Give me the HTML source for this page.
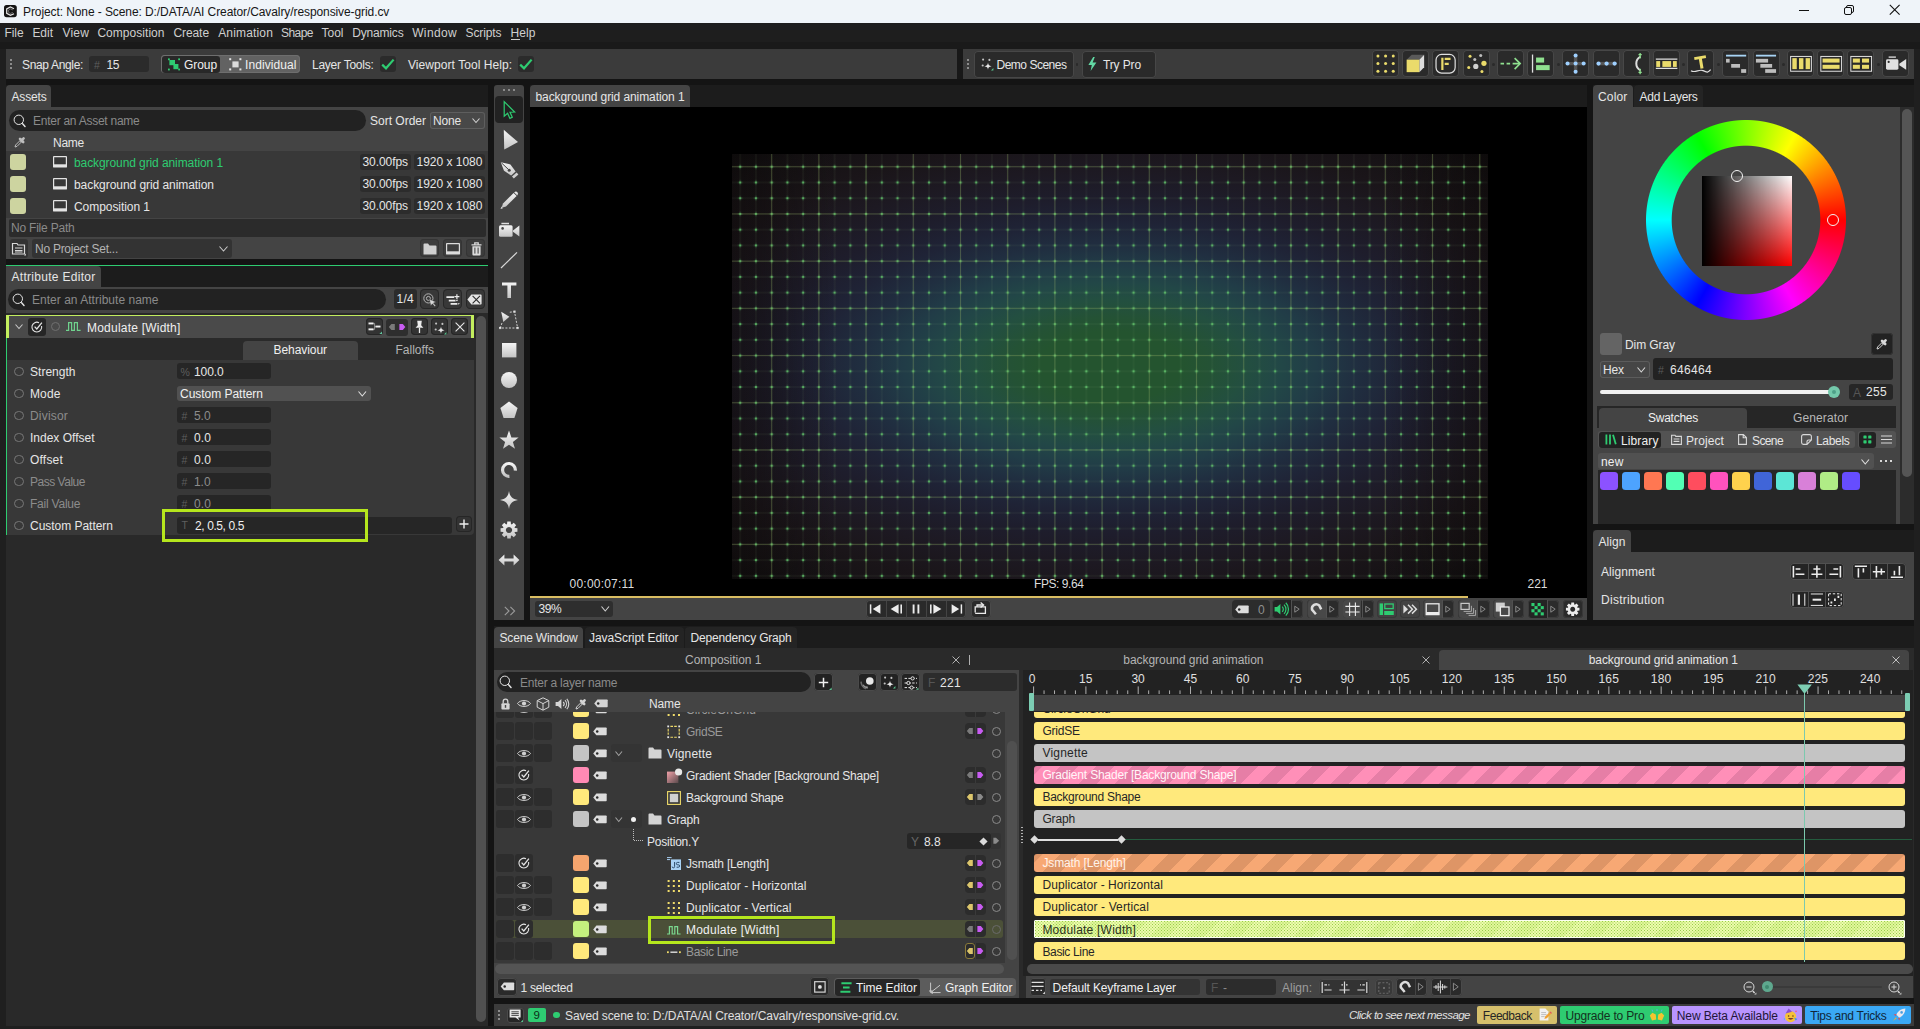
<!DOCTYPE html>
<html><head><meta charset="utf-8"><title>Cavalry</title>
<style>
html,body{margin:0;padding:0;background:#1f1f1f;}
body{width:1920px;height:1029px;position:relative;overflow:hidden;font-family:"Liberation Sans",sans-serif;}
.a{position:absolute;box-sizing:border-box;}
.t{position:absolute;white-space:pre;}
svg{overflow:visible}
</style></head><body>
<div class="a" style="left:0px;top:0px;width:1920px;height:23px;background:#eff4f9;"></div>
<svg class="a" style="left:3.5px;top:4.6px;" width="13" height="12.4" viewBox="0 0 13 12.4"><rect x="0" y="0" width="12.8" height="12.2" rx="2.6" fill="#141414"/><path d="M10 3.7 L6.4 1.9 L2.7 3.9 V8.4 L6.4 10.4 L10 8.7" fill="none" stroke="#e4e4e4" stroke-width="1.25"/><path d="M8.9 5 L6.4 3.9 L4.6 4.9 V7.4 L6.4 8.4 L8.9 7.4" fill="none" stroke="#8a8a8a" stroke-width="0.7"/></svg>
<span class="t" style="top:3.65px;line-height:16px;font-size:12px;color:#161616;left:23px;letter-spacing:-0.09px;">Project: None - Scene: D:/DATA/AI Creator/Cavalry/responsive-grid.cv</span>
<svg class="a" style="left:1798px;top:4.1px;" width="12" height="12" viewBox="0 0 12 12"><path d="M1 6.5 H11" stroke="#111" stroke-width="1"/></svg>
<svg class="a" style="left:1843px;top:4.1px;" width="12" height="12" viewBox="0 0 12 12"><rect x="1.5" y="3.5" width="7" height="7" rx="1.5" fill="none" stroke="#111" stroke-width="1"/><path d="M3.5 3.5 V3 a1.5 1.5 0 0 1 1.5 -1.5 H9 a1.5 1.5 0 0 1 1.5 1.5 V7 a1.5 1.5 0 0 1 -1.5 1.5 H8.5" fill="none" stroke="#111" stroke-width="1"/></svg>
<svg class="a" style="left:1889.4px;top:4.3px;" width="12" height="12" viewBox="0 0 12 12"><path d="M0.8 0.8 L10.6 10.6 M10.6 0.8 L0.8 10.6" stroke="#111" stroke-width="1.1"/></svg>
<div class="a" style="left:0px;top:23px;width:1920px;height:19.4px;background:#1e1e1e;"></div>
<div class="a" style="left:0px;top:42.4px;width:1920px;height:6.6px;background:#1a1a1a;"></div>
<div class="a" style="left:6px;top:79px;width:1908px;height:947.2px;background:#141414;"></div>
<div class="a" style="left:957px;top:49px;width:6px;height:30px;background:#181818;"></div>
<div class="a" style="left:6px;top:85px;width:481.5px;height:22.2px;background:#1c1c1c;"></div>
<div class="a" style="left:6px;top:266px;width:481.5px;height:22.2px;background:#1c1c1c;"></div>
<div class="a" style="left:530px;top:85px;width:1057px;height:22.2px;background:#1c1c1c;"></div>
<div class="a" style="left:1593px;top:85px;width:321px;height:22.2px;background:#1c1c1c;"></div>
<div class="a" style="left:1593px;top:530px;width:321px;height:22.2px;background:#1c1c1c;"></div>
<div class="a" style="left:494px;top:625.8px;width:1420px;height:22.2px;background:#1c1c1c;"></div>
<span class="t" style="top:25.15px;line-height:16px;font-size:12px;color:#cfcfcf;left:4.6px;letter-spacing:-0.11px;">File</span>
<span class="t" style="top:25.15px;line-height:16px;font-size:12px;color:#cfcfcf;left:32.4px;letter-spacing:-0.02px;">Edit</span>
<span class="t" style="top:25.15px;line-height:16px;font-size:12px;color:#cfcfcf;left:62.5px;letter-spacing:0.18px;">View</span>
<span class="t" style="top:25.15px;line-height:16px;font-size:12px;color:#cfcfcf;left:97.4px;letter-spacing:0.04px;">Composition</span>
<span class="t" style="top:25.15px;line-height:16px;font-size:12px;color:#cfcfcf;left:173.4px;letter-spacing:-0.07px;">Create</span>
<span class="t" style="top:25.15px;line-height:16px;font-size:12px;color:#cfcfcf;left:218.2px;letter-spacing:0.16px;">Animation</span>
<span class="t" style="top:25.15px;line-height:16px;font-size:12px;color:#cfcfcf;left:281px;letter-spacing:-0.54px;">Shape</span>
<span class="t" style="top:25.15px;line-height:16px;font-size:12px;color:#cfcfcf;left:321.6px;letter-spacing:-0.03px;">Tool</span>
<span class="t" style="top:25.15px;line-height:16px;font-size:12px;color:#cfcfcf;left:352.2px;letter-spacing:-0.17px;">Dynamics</span>
<span class="t" style="top:25.15px;line-height:16px;font-size:12px;color:#cfcfcf;left:412.2px;letter-spacing:0.35px;">Window</span>
<span class="t" style="top:25.15px;line-height:16px;font-size:12px;color:#cfcfcf;left:465.5px;letter-spacing:-0.1px;">Scripts</span>
<span class="t" style="top:25.15px;line-height:16px;font-size:12px;color:#cfcfcf;left:510.4px;letter-spacing:0.13px;">Help</span>
<div class="a" style="left:510.6px;top:39.3px;width:9.2px;height:1px;background:#cfcfcf;"></div>
<div class="a" style="left:6px;top:49px;width:951px;height:30px;background:#3b3b3b;"></div>
<div class="a" style="left:10.1px;top:59.2px;width:2px;height:2px;background:#8c8c8c;"></div>
<div class="a" style="left:10.1px;top:63.2px;width:2px;height:2px;background:#8c8c8c;"></div>
<div class="a" style="left:10.1px;top:67.2px;width:2px;height:2px;background:#8c8c8c;"></div>
<span class="t" style="top:56.65px;line-height:16px;font-size:12px;color:#e6e6e6;left:22px;letter-spacing:-0.34px;">Snap Angle:</span>
<div class="a" style="left:89px;top:56px;width:60px;height:16px;background:#2b2b2b;border-radius:3px;"></div>
<span class="t" style="top:57.65px;line-height:14px;font-size:10.5px;color:#5e5e5e;left:94px;">#</span>
<span class="t" style="top:56.65px;line-height:16px;font-size:12px;color:#e6e6e6;left:106.5px;letter-spacing:-0.43px;">15</span>
<div class="a" style="left:161px;top:55px;width:139.2px;height:18px;background:#626262;border-radius:4px;box-shadow:inset 0 0 0 1px #6e6e6e;"></div>
<div class="a" style="left:162px;top:56px;width:58px;height:16.5px;background:#282828;border-radius:3px;"></div>
<svg class="a" style="left:167px;top:57.5px;" width="14" height="13" viewBox="0 0 14 13"><rect x="2.4" y="2" width="5.6" height="5.2" fill="#2ecc71"/><rect x="6.4" y="6" width="5" height="5.2" fill="#2ecc71"/><rect x="1" y="0.4" width="1.8" height="1.8" fill="#2ecc71"/><rect x="1" y="10.6" width="1.8" height="1.8" fill="#2ecc71"/><rect x="11.2" y="0.4" width="1.8" height="1.8" fill="#2ecc71"/><rect x="11.2" y="10.6" width="1.8" height="1.8" fill="#2ecc71"/></svg>
<span class="t" style="top:56.65px;line-height:16px;font-size:12px;color:#f0f0f0;left:184px;letter-spacing:-0.07px;">Group</span>
<svg class="a" style="left:228.6px;top:57.6px;" width="13" height="13" viewBox="0 0 13 13"><rect x="3.4" y="3.4" width="6.2" height="6" fill="#dcdcdc"/><rect x="0.2" y="0.2" width="2" height="2" fill="#e4e4e4"/><rect x="0.2" y="10.4" width="2" height="2" fill="#e4e4e4"/><rect x="10.4" y="0.2" width="2" height="2" fill="#e4e4e4"/><rect x="10.4" y="10.4" width="2" height="2" fill="#e4e4e4"/></svg>
<span class="t" style="top:56.65px;line-height:16px;font-size:12px;color:#f0f0f0;left:245px;letter-spacing:0.08px;">Individual</span>
<span class="t" style="top:56.65px;line-height:16px;font-size:12px;color:#e6e6e6;left:312px;letter-spacing:-0.25px;">Layer Tools:</span>
<div class="a" style="left:380px;top:56px;width:16px;height:16px;background:#2b2b2b;border-radius:3px;"></div>
<svg class="a" style="left:380px;top:56px;" width="16" height="16" viewBox="0 0 16 16"><path d="M2.2 8.6 L6 12.3 L13.6 3.6" fill="none" stroke="#2ecc71" stroke-width="2.2" stroke-linejoin="miter"/></svg>
<span class="t" style="top:56.65px;line-height:16px;font-size:12px;color:#e6e6e6;left:408px;letter-spacing:0.06px;">Viewport Tool Help:</span>
<div class="a" style="left:518px;top:56px;width:16px;height:16px;background:#2b2b2b;border-radius:3px;"></div>
<svg class="a" style="left:518px;top:56px;" width="16" height="16" viewBox="0 0 16 16"><path d="M2.2 8.6 L6 12.3 L13.6 3.6" fill="none" stroke="#2ecc71" stroke-width="2.2" stroke-linejoin="miter"/></svg>
<div class="a" style="left:963px;top:49px;width:951px;height:30px;background:#3b3b3b;"></div>
<div class="a" style="left:967.1px;top:59.2px;width:2px;height:2px;background:#8c8c8c;"></div>
<div class="a" style="left:967.1px;top:63.2px;width:2px;height:2px;background:#8c8c8c;"></div>
<div class="a" style="left:967.1px;top:67.2px;width:2px;height:2px;background:#8c8c8c;"></div>
<div class="a" style="left:974px;top:51px;width:99.5px;height:26.5px;background:#2a2a2a;border-radius:4px;box-shadow:inset 0 0 0 1px #474747;"></div>
<svg class="a" style="left:980px;top:57.4px;" width="14" height="14" viewBox="0 0 14 14"><circle cx="3.1" cy="2.6" r="1.05" fill="#c4c4c4"/><circle cx="9.4" cy="2.9" r="1.05" fill="#c4c4c4"/><circle cx="2.7" cy="8.5" r="1.05" fill="#c4c4c4"/><path d="M8 5.6 C8.3 8 8.9 8.8 11.6 9.2 C8.9 9.6 8.3 10.4 8 12.8 C7.7 10.4 7.1 9.6 4.4 9.2 C7.1 8.8 7.7 8 8 5.6 Z" fill="#e8e8e8"/><path d="M13.4 11 V13.4 H11 Z" fill="#59c58f"/></svg>
<span class="t" style="top:56.65px;line-height:16px;font-size:12px;color:#e6e6e6;left:996.5px;letter-spacing:-0.49px;">Demo Scenes</span>
<div class="a" style="left:1075.9px;top:63.1px;width:2.6px;height:2.6px;background:#2a2a2a;border-radius:2px;"></div>
<div class="a" style="left:1081.5px;top:51px;width:74px;height:26.5px;background:#2a2a2a;border-radius:4px;box-shadow:inset 0 0 0 1px #474747;"></div>
<svg class="a" style="left:1088px;top:57px;" width="9" height="14" viewBox="0 0 9 14"><path d="M5.2 0 L0.4 8 H3.8 L2.6 14 L8.4 5.4 H4.6 L6.8 0 Z" fill="#62d9a4"/></svg>
<span class="t" style="top:56.65px;line-height:16px;font-size:12px;color:#e6e6e6;left:1103px;letter-spacing:-0.13px;">Try Pro</span>
<div class="a" style="left:1372.3px;top:50.3px;width:27.2px;height:27.2px;background:#2a2a2a;border-radius:4px;box-shadow:inset 0 0 0 1px #474747;"></div>
<svg class="a" style="left:1372.3px;top:50.3px;" width="27.2" height="27.2" viewBox="0 0 27 27"><circle cx="5.9" cy="5.9" r="1.5" fill="#eadb6b"/><circle cx="5.9" cy="13.5" r="1.5" fill="#eadb6b"/><circle cx="5.9" cy="21.1" r="1.5" fill="#eadb6b"/><circle cx="13.5" cy="5.9" r="1.5" fill="#eadb6b"/><circle cx="13.5" cy="13.5" r="1.5" fill="#eadb6b"/><circle cx="13.5" cy="21.1" r="1.5" fill="#eadb6b"/><circle cx="21.1" cy="5.9" r="1.5" fill="#eadb6b"/><circle cx="21.1" cy="13.5" r="1.5" fill="#eadb6b"/><circle cx="21.1" cy="21.1" r="1.5" fill="#eadb6b"/></svg>
<div class="a" style="left:1402.3px;top:50.3px;width:27.2px;height:27.2px;background:#2a2a2a;border-radius:4px;box-shadow:inset 0 0 0 1px #474747;"></div>
<svg class="a" style="left:1402.3px;top:50.3px;" width="27.2" height="27.2" viewBox="0 0 27 27"><path d="M4.6 9.6 L9.6 4.8 H22 L17.2 9.6 Z" fill="#5a5a5a"/><path d="M17.2 9.6 L22 4.8 V17.2 L17.2 22 Z" fill="#dcdcdc"/><rect x="4.6" y="9.6" width="12.6" height="12.4" fill="#eadb6b"/></svg>
<div class="a" style="left:1432.3px;top:50.3px;width:27.2px;height:27.2px;background:#2a2a2a;border-radius:4px;box-shadow:inset 0 0 0 1px #474747;"></div>
<svg class="a" style="left:1432.3px;top:50.3px;" width="27.2" height="27.2" viewBox="0 0 27 27"><rect x="4" y="4.4" width="19" height="18.6" rx="5.5" fill="none" stroke="#e0e0e0" stroke-width="1.2"/><path d="M9.2 7.6 H11.4 V19.8 H9.2 Z M12.6 7.6 H18.4 V10 H12.6 Z M12.6 12.6 H16.6 V14.8 H12.6 Z" fill="#eadb6b"/></svg>
<div class="a" style="left:1462.5px;top:50.3px;width:27.2px;height:27.2px;background:#2a2a2a;border-radius:4px;box-shadow:inset 0 0 0 1px #474747;"></div>
<svg class="a" style="left:1462.5px;top:50.3px;" width="27.2" height="27.2" viewBox="0 0 27 27"><circle cx="7" cy="6.3" r="1.5" fill="#eadb6b"/><circle cx="5.7" cy="17.4" r="1.5" fill="#eadb6b"/><circle cx="18.8" cy="21.3" r="1.5" fill="#eadb6b"/><circle cx="20.8" cy="13.2" r="2.6" fill="#eadb6b"/><circle cx="17.6" cy="5.4" r="1.5" fill="#bdbdbd"/><circle cx="11.7" cy="9.5" r="1.5" fill="#bdbdbd"/><circle cx="12.7" cy="16.3" r="2.6" fill="#d0d0d0"/></svg>
<div class="a" style="left:1497px;top:50.3px;width:27.2px;height:27.2px;background:#2a2a2a;border-radius:4px;box-shadow:inset 0 0 0 1px #474747;"></div>
<svg class="a" style="left:1497px;top:50.3px;" width="27.2" height="27.2" viewBox="0 0 27 27"><path d="M3.5 13.5 H7 M9.5 13.5 H13 M15.5 13.5 H22" stroke="#8fe08f" stroke-width="1.6" fill="none"/><path d="M17.5 8 L23 13.5 L17.5 19" stroke="#8fe08f" stroke-width="1.6" fill="none"/></svg>
<div class="a" style="left:1527px;top:50.3px;width:27.2px;height:27.2px;background:#2a2a2a;border-radius:4px;box-shadow:inset 0 0 0 1px #474747;"></div>
<svg class="a" style="left:1527px;top:50.3px;" width="27.2" height="27.2" viewBox="0 0 27 27"><path d="M5.5 4.5 V22.5" stroke="#e0e0e0" stroke-width="1.3"/><rect x="9" y="7.5" width="8" height="5" fill="#8fe08f"/><rect x="9" y="15" width="13.5" height="5" fill="#8fe08f"/></svg>
<div class="a" style="left:1562px;top:50.3px;width:27.2px;height:27.2px;background:#2a2a2a;border-radius:4px;box-shadow:inset 0 0 0 1px #474747;"></div>
<svg class="a" style="left:1562px;top:50.3px;" width="27.2" height="27.2" viewBox="0 0 27 27"><path d="M13.5 6 V21 M6 13.5 H21" stroke="#555" stroke-width="3.4"/><circle cx="13.5" cy="5.5" r="2" fill="#9fd0ff"/><circle cx="13.5" cy="21.5" r="2" fill="#9fd0ff"/><circle cx="5.5" cy="13.5" r="2" fill="#9fd0ff"/><circle cx="21.5" cy="13.5" r="2" fill="#9fd0ff"/><circle cx="13.5" cy="13.5" r="2" fill="#9fd0ff"/></svg>
<div class="a" style="left:1592.5px;top:50.3px;width:27.2px;height:27.2px;background:#2a2a2a;border-radius:4px;box-shadow:inset 0 0 0 1px #474747;"></div>
<svg class="a" style="left:1592.5px;top:50.3px;" width="27.2" height="27.2" viewBox="0 0 27 27"><path d="M5.5 13.5 H21.5" stroke="#555" stroke-width="3.4"/><circle cx="5.5" cy="13.5" r="2.1" fill="#9fd0ff"/><circle cx="13.5" cy="13.5" r="2.1" fill="#9fd0ff"/><circle cx="21.5" cy="13.5" r="2.1" fill="#9fd0ff"/></svg>
<div class="a" style="left:1622.5px;top:50.3px;width:27.2px;height:27.2px;background:#2a2a2a;border-radius:4px;box-shadow:inset 0 0 0 1px #474747;"></div>
<svg class="a" style="left:1622.5px;top:50.3px;" width="27.2" height="27.2" viewBox="0 0 27 27"><path d="M17.4 6.6 A7.6 7.6 0 0 0 17.4 20.2" fill="none" stroke="#dcdcdc" stroke-width="2"/><path d="M17 3 V8.4 M17 18.6 V24 M15.4 4.6 H18.6 M15.4 22.2 H18.6" stroke="#8fe08f" stroke-width="1.3"/></svg>
<div class="a" style="left:1652.5px;top:50.3px;width:27.2px;height:27.2px;background:#2a2a2a;border-radius:4px;box-shadow:inset 0 0 0 1px #474747;"></div>
<svg class="a" style="left:1652.5px;top:50.3px;" width="27.2" height="27.2" viewBox="0 0 27 27"><path d="M2.8 9.1 H24.2 M2.8 18.3 H24.2" stroke="#e0e0e0" stroke-width="1.1"/><rect x="3.2" y="11" width="3.9" height="5.8" fill="#eadb6b"/><rect x="9.3" y="11" width="8.7" height="5.8" fill="#eadb6b"/><rect x="19.8" y="11" width="3.8" height="5.8" fill="#eadb6b"/></svg>
<div class="a" style="left:1687px;top:50.3px;width:27.2px;height:27.2px;background:#2a2a2a;border-radius:4px;box-shadow:inset 0 0 0 1px #474747;"></div>
<svg class="a" style="left:1687px;top:50.3px;" width="27.2" height="27.2" viewBox="0 0 27 27"><path d="M7 7.2 L18.5 5.2 L19 8 L14.8 8.8 L16.4 18 L13.4 18.5 L11.8 9.3 L7.5 10 Z" fill="#eadb6b"/><path d="M4 20.5 C8 23.5 12 18.5 16 20.5 S21 22.5 23.5 19.5" fill="none" stroke="#e0e0e0" stroke-width="1.2"/></svg>
<div class="a" style="left:1722px;top:50.3px;width:27.2px;height:27.2px;background:#2a2a2a;border-radius:4px;box-shadow:inset 0 0 0 1px #474747;"></div>
<svg class="a" style="left:1722px;top:50.3px;" width="27.2" height="27.2" viewBox="0 0 27 27"><path d="M4 5.6 H24" stroke="#a8d4f5" stroke-width="1.8"/><rect x="4" y="8.8" width="3.6" height="3.7" fill="#bdbdbd"/><rect x="9.1" y="13.9" width="8.8" height="3.7" fill="#bdbdbd"/><rect x="19" y="19" width="5" height="3.7" fill="#bdbdbd"/></svg>
<div class="a" style="left:1753px;top:50.3px;width:27.2px;height:27.2px;background:#2a2a2a;border-radius:4px;box-shadow:inset 0 0 0 1px #474747;"></div>
<svg class="a" style="left:1753px;top:50.3px;" width="27.2" height="27.2" viewBox="0 0 27 27"><path d="M2.9 5.6 H22.9" stroke="#a8d4f5" stroke-width="1.8"/><rect x="2.9" y="8.8" width="12.1" height="3.7" fill="#bdbdbd"/><rect x="7.3" y="13.9" width="11.7" height="3.7" fill="#bdbdbd"/><rect x="12.1" y="19" width="10.8" height="3.7" fill="#bdbdbd"/></svg>
<div class="a" style="left:1787px;top:50.3px;width:27.2px;height:27.2px;background:#2a2a2a;border-radius:4px;box-shadow:inset 0 0 0 1px #474747;"></div>
<svg class="a" style="left:1787px;top:50.3px;" width="27.2" height="27.2" viewBox="0 0 27 27"><rect x="3.6" y="6.4" width="20.6" height="14.7" fill="none" stroke="#e0e0e0" stroke-width="1"/><rect x="5.3" y="8.1" width="4.4" height="10.9" fill="#eadb6b"/><rect x="11.9" y="8.1" width="4.4" height="10.9" fill="#eadb6b"/><rect x="18.5" y="8.1" width="4.3" height="10.9" fill="#eadb6b"/></svg>
<div class="a" style="left:1817px;top:50.3px;width:27.2px;height:27.2px;background:#2a2a2a;border-radius:4px;box-shadow:inset 0 0 0 1px #474747;"></div>
<svg class="a" style="left:1817px;top:50.3px;" width="27.2" height="27.2" viewBox="0 0 27 27"><rect x="3.8" y="6.4" width="20.6" height="14.7" fill="none" stroke="#e0e0e0" stroke-width="1"/><rect x="5.5" y="8.5" width="16.9" height="4" fill="#eadb6b"/><rect x="5.5" y="14.7" width="16.9" height="4" fill="#eadb6b"/></svg>
<div class="a" style="left:1847px;top:50.3px;width:27.2px;height:27.2px;background:#2a2a2a;border-radius:4px;box-shadow:inset 0 0 0 1px #474747;"></div>
<svg class="a" style="left:1847px;top:50.3px;" width="27.2" height="27.2" viewBox="0 0 27 27"><rect x="3.8" y="6.4" width="20.6" height="14.7" fill="none" stroke="#e0e0e0" stroke-width="1"/><rect x="5.8" y="8.5" width="7" height="4" fill="#eadb6b"/><rect x="14.9" y="8.5" width="7" height="4" fill="#eadb6b"/><rect x="5.8" y="14.7" width="7" height="4" fill="#eadb6b"/><rect x="14.9" y="14.7" width="7" height="4" fill="#eadb6b"/></svg>
<div class="a" style="left:1882px;top:50.3px;width:27.2px;height:27.2px;background:#2a2a2a;border-radius:4px;box-shadow:inset 0 0 0 1px #474747;"></div>
<svg class="a" style="left:1882px;top:50.3px;" width="27.2" height="27.2" viewBox="0 0 27 27"><rect x="4" y="9.3" width="12.3" height="10.2" rx="1.4" fill="#e0e0e0"/><path d="M17.2 13.6 L24 9 V19.6 L17.2 15.2 Z" fill="#e0e0e0"/><rect x="6.6" y="6.4" width="7.2" height="1.3" fill="#e0e0e0"/><circle cx="6.6" cy="11.8" r="1.1" fill="#2a2a2a"/></svg>
<div class="a" style="left:1492px;top:63.1px;width:2.6px;height:2.6px;background:#2a2a2a;border-radius:2px;"></div>
<div class="a" style="left:1557px;top:63.1px;width:2.6px;height:2.6px;background:#2a2a2a;border-radius:2px;"></div>
<div class="a" style="left:1682.4px;top:63.1px;width:2.6px;height:2.6px;background:#2a2a2a;border-radius:2px;"></div>
<div class="a" style="left:1717.4px;top:63.1px;width:2.6px;height:2.6px;background:#2a2a2a;border-radius:2px;"></div>
<div class="a" style="left:1782.3px;top:63.1px;width:2.6px;height:2.6px;background:#2a2a2a;border-radius:2px;"></div>
<div class="a" style="left:1877.3px;top:63.1px;width:2.6px;height:2.6px;background:#2a2a2a;border-radius:2px;"></div>
<div class="a" style="left:6px;top:85px;width:45px;height:23px;background:#444444;border-radius:4px 4px 0 0;"></div>
<span class="t" style="top:88.65px;line-height:16px;font-size:12px;color:#e6e6e6;left:11.5px;letter-spacing:-0.17px;">Assets</span>
<div class="a" style="left:6px;top:107px;width:481.5px;height:152.2px;background:#444444;"></div>
<div class="a" style="left:9px;top:110px;width:357px;height:20.5px;background:#222;border-radius:10.5px;"></div>
<svg class="a" style="left:12.5px;top:113.5px;" width="14" height="15" viewBox="0 0 14 15"><circle cx="5.8" cy="5.8" r="4.7" fill="none" stroke="#e4e4e4" stroke-width="1"/><path d="M9.6 9.8 L12 12.4" stroke="#e4e4e4" stroke-width="1.5" stroke-linecap="round"/></svg>
<span class="t" style="top:112.65px;line-height:16px;font-size:12px;color:#8a8a8a;left:33px;letter-spacing:-0.26px;">Enter an Asset name</span>
<span class="t" style="top:112.65px;line-height:16px;font-size:12px;color:#e6e6e6;left:370px;letter-spacing:-0px;">Sort Order</span>
<div class="a" style="left:430px;top:111.5px;width:55px;height:17.5px;background:#484848;border-radius:3px;box-shadow:inset 0 0 0 1px #5e5e5e;"></div>
<span class="t" style="top:112.65px;line-height:16px;font-size:12px;color:#e6e6e6;left:433px;letter-spacing:-0.17px;">None</span>
<svg class="a" style="left:471.5px;top:118px;" width="8" height="5" viewBox="0 0 8 5"><path d="M0.5 0.5 L4.0 4.5 L7.5 0.5" fill="none" stroke="#d0d0d0" stroke-width="1.1"/></svg>
<svg class="a" style="left:14px;top:136px;" width="12" height="12" viewBox="0 0 12 12"><path d="M1 11 L1.6 9 L6.6 4 L8 5.4 L3 10.4 Z" fill="none" stroke="#bdbdbd" stroke-width="1"/><path d="M6 2.8 L9.2 6 M7.2 4.8 L9.6 2.4" stroke="#bdbdbd" stroke-width="2.6" stroke-linecap="round"/></svg>
<span class="t" style="top:135.15px;line-height:16px;font-size:12px;color:#e6e6e6;left:53px;letter-spacing:-0.25px;">Name</span>
<div class="a" style="left:6px;top:151px;width:481.5px;height:66.5px;background:#383838;"></div>
<div class="a" style="left:10px;top:154.2px;width:16px;height:15.8px;background:#cdd4a0;border-radius:3px;"></div>
<svg class="a" style="left:53px;top:155.8px;" width="14" height="12" viewBox="0 0 14 12"><rect x="0.6" y="0.6" width="12.8" height="10.4" rx="0.3" fill="none" stroke="#e4e4e4" stroke-width="1.2"/><rect x="0.6" y="8.3" width="12.8" height="2.7" fill="#e4e4e4"/></svg>
<span class="t" style="top:154.65px;line-height:16px;font-size:12px;color:#2ecc71;left:74px;letter-spacing:-0.09px;">background grid animation 1</span>
<div class="a" style="left:360px;top:154px;width:50.5px;height:16px;background:#2c2c2c;border-radius:3px;"></div>
<span class="t" style="top:153.65px;line-height:16px;font-size:12px;color:#e6e6e6;left:362.5px;letter-spacing:-0.07px;">30.00fps</span>
<div class="a" style="left:414px;top:154px;width:71px;height:16px;background:#2c2c2c;border-radius:3px;"></div>
<span class="t" style="top:153.65px;line-height:16px;font-size:12px;color:#e6e6e6;left:416.5px;letter-spacing:-0.01px;">1920 x 1080</span>
<div class="a" style="left:10px;top:176.2px;width:16px;height:15.8px;background:#cdd4a0;border-radius:3px;"></div>
<svg class="a" style="left:53px;top:177.8px;" width="14" height="12" viewBox="0 0 14 12"><rect x="0.6" y="0.6" width="12.8" height="10.4" rx="0.3" fill="none" stroke="#e4e4e4" stroke-width="1.2"/><rect x="0.6" y="8.3" width="12.8" height="2.7" fill="#e4e4e4"/></svg>
<span class="t" style="top:176.65px;line-height:16px;font-size:12px;color:#e6e6e6;left:74px;letter-spacing:-0.06px;">background grid animation</span>
<div class="a" style="left:360px;top:176px;width:50.5px;height:16px;background:#2c2c2c;border-radius:3px;"></div>
<span class="t" style="top:175.65px;line-height:16px;font-size:12px;color:#e6e6e6;left:362.5px;letter-spacing:-0.07px;">30.00fps</span>
<div class="a" style="left:414px;top:176px;width:71px;height:16px;background:#2c2c2c;border-radius:3px;"></div>
<span class="t" style="top:175.65px;line-height:16px;font-size:12px;color:#e6e6e6;left:416.5px;letter-spacing:-0.01px;">1920 x 1080</span>
<div class="a" style="left:10px;top:198.2px;width:16px;height:15.8px;background:#cdd4a0;border-radius:3px;"></div>
<svg class="a" style="left:53px;top:199.8px;" width="14" height="12" viewBox="0 0 14 12"><rect x="0.6" y="0.6" width="12.8" height="10.4" rx="0.3" fill="none" stroke="#e4e4e4" stroke-width="1.2"/><rect x="0.6" y="8.3" width="12.8" height="2.7" fill="#e4e4e4"/></svg>
<span class="t" style="top:198.65px;line-height:16px;font-size:12px;color:#e6e6e6;left:74px;letter-spacing:-0.06px;">Composition 1</span>
<div class="a" style="left:360px;top:198px;width:50.5px;height:16px;background:#2c2c2c;border-radius:3px;"></div>
<span class="t" style="top:197.65px;line-height:16px;font-size:12px;color:#e6e6e6;left:362.5px;letter-spacing:-0.07px;">30.00fps</span>
<div class="a" style="left:414px;top:198px;width:71px;height:16px;background:#2c2c2c;border-radius:3px;"></div>
<span class="t" style="top:197.65px;line-height:16px;font-size:12px;color:#e6e6e6;left:416.5px;letter-spacing:-0.01px;">1920 x 1080</span>
<div class="a" style="left:9px;top:219px;width:476.5px;height:17.5px;background:#2b2b2b;border-radius:2px;"></div>
<span class="t" style="top:220.15px;line-height:16px;font-size:12px;color:#8a8a8a;left:11px;letter-spacing:-0.21px;">No File Path</span>
<div class="a" style="left:10px;top:239px;width:17.5px;height:18.5px;background:#333;border-radius:3px;"></div>
<svg class="a" style="left:12px;top:242px;" width="14" height="13" viewBox="0 0 14 13"><path d="M0.5 12 V1.5 H5 L6 3 H12.5 V12 Z" fill="none" stroke="#d8d8d8" stroke-width="1.2"/><path d="M3 6 H10.5 M3 8.5 H10.5 M3 10 H10.5" stroke="#d8d8d8" stroke-width="1.2"/><path d="M14 11.5 V13.5 H12 Z" fill="#cfcfcf"/></svg>
<div class="a" style="left:32px;top:239px;width:200px;height:18.5px;background:#333;border-radius:3px;"></div>
<span class="t" style="top:240.65px;line-height:16px;font-size:12px;color:#b4b4b4;left:35px;letter-spacing:-0.26px;">No Project Set...</span>
<svg class="a" style="left:218.5px;top:246px;" width="9" height="5.5" viewBox="0 0 9 5.5"><path d="M0.5 0.5 L4.5 5.0 L8.5 0.5" fill="none" stroke="#c8c8c8" stroke-width="1.1"/></svg>
<div class="a" style="left:420.4px;top:238.7px;width:19px;height:18.8px;background:#3d3d3d;border-radius:4px;box-shadow:inset 0 0 0 1px #353535;"></div>
<div class="a" style="left:443.4px;top:238.7px;width:19px;height:18.8px;background:#3d3d3d;border-radius:4px;box-shadow:inset 0 0 0 1px #353535;"></div>
<div class="a" style="left:466.4px;top:238.7px;width:19px;height:18.8px;background:#3d3d3d;border-radius:4px;box-shadow:inset 0 0 0 1px #353535;"></div>
<svg class="a" style="left:423px;top:242.5px;" width="14" height="12" viewBox="0 0 14 12"><path d="M0.5 11.5 V1.5 a1 1 0 0 1 1 -1 H5 L6.5 2.5 H12.5 a1 1 0 0 1 1 1 V11.5 Z" fill="#d0d0d0"/></svg>
<svg class="a" style="left:446px;top:242.5px;" width="14" height="12" viewBox="0 0 14 12"><rect x="0.6" y="0.6" width="12.8" height="10.4" rx="0.3" fill="none" stroke="#dcdcdc" stroke-width="1.2"/><rect x="0.6" y="8.3" width="12.8" height="2.7" fill="#dcdcdc"/></svg>
<svg class="a" style="left:470.5px;top:241.5px;" width="11" height="14" viewBox="0 0 11 14"><path d="M0.5 2.8 H10.5 M3.8 2.5 V0.8 H7.2 V2.5" stroke="#dcdcdc" stroke-width="1.3" fill="none"/><path d="M1.4 4.2 H9.6 V12.4 a1 1 0 0 1 -1 1 H2.4 a1 1 0 0 1 -1 -1 Z" fill="#dcdcdc"/><path d="M3.9 5.6 V11.6 M7.1 5.6 V11.6" stroke="#3a3a3a" stroke-width="1"/></svg>
<div class="a" style="left:6px;top:264.6px;width:481.5px;height:1.4px;background:#2ecc71;"></div>
<div class="a" style="left:6px;top:266px;width:95px;height:22px;background:#444444;border-radius:0 4px 0 0;"></div>
<span class="t" style="top:269.15px;line-height:16px;font-size:12px;color:#e6e6e6;left:11.5px;letter-spacing:0.29px;">Attribute Editor</span>
<div class="a" style="left:6px;top:287px;width:481.5px;height:26px;background:#444444;"></div>
<div class="a" style="left:6px;top:313px;width:481.8px;height:713.2px;background:#292929;"></div>
<div class="a" style="left:8px;top:289px;width:377.5px;height:20.5px;background:#222;border-radius:10.5px;"></div>
<svg class="a" style="left:12px;top:292.5px;" width="14" height="15" viewBox="0 0 14 15"><circle cx="5.8" cy="5.8" r="4.7" fill="none" stroke="#e4e4e4" stroke-width="1"/><path d="M9.6 9.8 L12 12.4" stroke="#e4e4e4" stroke-width="1.5" stroke-linecap="round"/></svg>
<span class="t" style="top:292.15px;line-height:16px;font-size:12px;color:#8a8a8a;left:32px;letter-spacing:0.02px;">Enter an Attribute name</span>
<div class="a" style="left:394px;top:289.2px;width:22.8px;height:19.6px;background:#2b2b2b;border-radius:3px;"></div>
<span class="t" style="top:291.45px;line-height:16px;font-size:12px;color:#e6e6e6;left:396.5px;letter-spacing:0.27px;">1/4</span>
<div class="a" style="left:420px;top:289.2px;width:19.4px;height:19.6px;background:#383838;border-radius:4.5px;box-shadow:inset 0 0 0 1px #272727;"></div>
<div class="a" style="left:443px;top:289.2px;width:19.4px;height:19.6px;background:#383838;border-radius:4.5px;box-shadow:inset 0 0 0 1px #272727;"></div>
<div class="a" style="left:466px;top:289.2px;width:19.4px;height:19.6px;background:#383838;border-radius:4.5px;box-shadow:inset 0 0 0 1px #272727;"></div>
<svg class="a" style="left:423px;top:293px;" width="14" height="14" viewBox="0 0 14 14"><circle cx="5.4" cy="5.4" r="4.6" fill="none" stroke="#b4b4b4" stroke-width="1"/><circle cx="5.4" cy="5.4" r="2" fill="none" stroke="#b4b4b4" stroke-width="1"/><path d="M6.4 6.2 L13 9 L10.4 10 L12.8 12.8 L11.8 13.6 L9.4 10.8 L7.8 12.8 Z" fill="#d8d8d8" stroke="#333" stroke-width="0.4"/></svg>
<svg class="a" style="left:446px;top:293px;" width="14" height="14" viewBox="0 0 14 14"><path d="M0.4 4.1 H8.1 M2.8 7.6 H9.5 M4.6 10.9 H11.3" stroke="#ececec" stroke-width="1.6"/><path d="M10.9 1.2 V6.2 M8.4 3.7 H13.4" stroke="#ececec" stroke-width="1.2"/><path d="M10 7.6 H11.4 V6.8 M11.8 10.9 H13 V10" stroke="#ececec" stroke-width="0.9" fill="none"/></svg>
<svg class="a" style="left:467.4px;top:293.6px;" width="15" height="12" viewBox="0 0 15 12"><path d="M0.4 5.6 L4.4 0.6 H13.8 a0.8 0.8 0 0 1 0.8 0.8 V9.8 a0.8 0.8 0 0 1 -0.8 0.8 H4.4 Z" fill="#e4e4e4"/><path d="M5.6 1.8 L13 9.4 M13 1.8 L5.6 9.4" stroke="#2c2c2c" stroke-width="1.1"/></svg>
<div class="a" style="left:475.9px;top:316px;width:10px;height:706px;background:#505050;border-radius:5px;"></div>
<div class="a" style="left:6px;top:315px;width:468px;height:23.3px;background:#4a4a4a;border-left:3.6px solid #c3ee5e;border-right:3.8px solid #c3ee5e;border-top:1.2px solid #c3ee5e;"></div>
<svg class="a" style="left:15px;top:323.5px;" width="8" height="5" viewBox="0 0 8 5"><path d="M0.5 0.5 L4.0 4.5 L7.5 0.5" fill="none" stroke="#c8c8c8" stroke-width="1.1"/></svg>
<div class="a" style="left:28px;top:318px;width:17.5px;height:18px;background:#262626;border-radius:3px;"></div>
<svg class="a" style="left:31px;top:321px;" width="12" height="12" viewBox="0 0 12 12"><path d="M10.6 5 A4.9 4.9 0 1 1 8 1.7" fill="none" stroke="#e4e4e4" stroke-width="1.1"/><path d="M3.6 5.6 L5.8 7.9 L10.9 1.7" fill="none" stroke="#e4e4e4" stroke-width="1.3"/></svg>
<div class="a" style="left:50.6px;top:322.4px;width:9px;height:9px;border-radius:5px;border:1.2px solid #707070;"></div>
<svg class="a" style="left:66px;top:322px;" width="15" height="9" viewBox="0 0 15 9"><path d="M0 8.3 H2.6 V0.7 H5.6 V8.3 H8.4 V0.7 H11.4 V8.3 H14.6" fill="none" stroke="#6fd28d" stroke-width="1.2"/></svg>
<span class="t" style="top:319.65px;line-height:16px;font-size:12px;color:#f0f0f0;left:87px;letter-spacing:0.22px;">Modulate [Width]</span>
<div class="a" style="left:366px;top:318.4px;width:16.8px;height:17px;background:#333;border-radius:4px;box-shadow:inset 0 0 0 1px #262626;"></div>
<div class="a" style="left:411px;top:318.4px;width:16.8px;height:17px;background:#333;border-radius:4px;box-shadow:inset 0 0 0 1px #262626;"></div>
<div class="a" style="left:431px;top:318.4px;width:16.8px;height:17px;background:#333;border-radius:4px;box-shadow:inset 0 0 0 1px #262626;"></div>
<div class="a" style="left:451px;top:318.4px;width:16.8px;height:17px;background:#333;border-radius:4px;box-shadow:inset 0 0 0 1px #262626;"></div>
<div class="a" style="left:386px;top:318.5px;width:21.5px;height:17px;background:#2e2e2e;border-radius:3px;"></div>
<svg class="a" style="left:366px;top:318.4px;" width="17" height="17" viewBox="0 0 17 17"><path d="M7.4 5.4 H8.6 V11.4 H7.4 M8.6 8.6 H9.6" fill="none" stroke="#9a9a9a" stroke-width="0.9"/><rect x="2.5" y="4.5" width="5" height="1.9" fill="#f0f0f0"/><rect x="2.5" y="10.4" width="5" height="1.9" fill="#f0f0f0"/><rect x="9.5" y="7.6" width="5" height="1.9" fill="#f0f0f0"/><path d="M16 13.4 V16 H13.4 Z" fill="#62c9a0"/></svg>
<svg class="a" style="left:386.5px;top:321px;" width="20" height="12" viewBox="0 0 20 12"><path d="M1.8 6 L4.4 3 H7.8 V9 H4.4 Z" fill="#7a7a7a"/><path d="M12.4 3 H15.8 L18.4 6 L15.8 9 H12.4 Z" fill="#c85cf2"/></svg>
<svg class="a" style="left:413.5px;top:320px;" width="11" height="14" viewBox="0 0 11 14"><path d="M3.2 0.8 H7.8 L7.2 5.2 L9.4 7.8 H1.6 L3.8 5.2 Z" fill="#ececec"/><path d="M5.5 7.8 V13" stroke="#ececec" stroke-width="1.3"/></svg>
<svg class="a" style="left:432.5px;top:320.5px;" width="14" height="14" viewBox="0 0 14 14"><circle cx="3.1" cy="2.6" r="1.05" fill="#c4c4c4"/><circle cx="9.4" cy="2.9" r="1.05" fill="#c4c4c4"/><circle cx="2.7" cy="8.5" r="1.05" fill="#c4c4c4"/><path d="M8 5.6 C8.3 8 8.9 8.8 11.6 9.2 C8.9 9.6 8.3 10.4 8 12.8 C7.7 10.4 7.1 9.6 4.4 9.2 C7.1 8.8 7.7 8 8 5.6 Z" fill="#e8e8e8"/><path d="M13.4 11 V13.4 H11 Z" fill="#59c58f"/></svg>
<svg class="a" style="left:454.5px;top:322px;" width="10" height="10" viewBox="0 0 10 10"><path d="M0.6 0.6 L9.4 9.4 M9.4 0.6 L0.6 9.4" stroke="#e8e8e8" stroke-width="1.1"/></svg>
<div class="a" style="left:6px;top:338.3px;width:1.2px;height:197px;background:#2ecc71;"></div>
<div class="a" style="left:7.2px;top:338.3px;width:467.3px;height:22px;background:#2a2a2a;"></div>
<div class="a" style="left:243px;top:340.5px;width:115px;height:20px;background:#444444;border-radius:4px 4px 0 0;"></div>
<span class="t" style="top:342.15px;line-height:16px;font-size:12px;color:#f0f0f0;left:273.5px;letter-spacing:-0.06px;">Behaviour</span>
<span class="t" style="top:342.15px;line-height:16px;font-size:12px;color:#b4b4b4;left:395.5px;letter-spacing:0px;">Falloffs</span>
<div class="a" style="left:7.2px;top:360.3px;width:467.3px;height:175px;background:#383838;border-radius:0 0 4px 0;"></div>
<div class="a" style="left:14.4px;top:366.5px;width:9.4px;height:9.4px;border-radius:5px;border:1.1px solid #777;"></div>
<span class="t" style="top:364.15px;line-height:16px;font-size:12px;color:#e6e6e6;left:30px;letter-spacing:0.02px;">Strength</span>
<div class="a" style="left:177px;top:363px;width:94px;height:16px;background:#262626;border-radius:3px;"></div>
<span class="t" style="top:364.65px;line-height:14px;font-size:10.5px;color:#5e5e5e;left:180.5px;">%</span>
<span class="t" style="top:364.15px;line-height:16px;font-size:12px;color:#e6e6e6;left:194px;letter-spacing:-0.11px;">100.0</span>
<div class="a" style="left:14.4px;top:388.5px;width:9.4px;height:9.4px;border-radius:5px;border:1.1px solid #777;"></div>
<span class="t" style="top:386.15px;line-height:16px;font-size:12px;color:#e6e6e6;left:30px;letter-spacing:0.12px;">Mode</span>
<div class="a" style="left:14.4px;top:410.5px;width:9.4px;height:9.4px;border-radius:5px;border:1.1px solid #777;"></div>
<span class="t" style="top:408.15px;line-height:16px;font-size:12px;color:#8c8c8c;left:30px;letter-spacing:0.19px;">Divisor</span>
<div class="a" style="left:177px;top:407px;width:94px;height:16px;background:#262626;border-radius:3px;"></div>
<span class="t" style="top:408.65px;line-height:14px;font-size:10.5px;color:#5e5e5e;left:181.5px;">#</span>
<span class="t" style="top:408.15px;line-height:16px;font-size:12px;color:#8c8c8c;left:194px;letter-spacing:-0.06px;">5.0</span>
<div class="a" style="left:14.4px;top:432.5px;width:9.4px;height:9.4px;border-radius:5px;border:1.1px solid #777;"></div>
<span class="t" style="top:430.15px;line-height:16px;font-size:12px;color:#e6e6e6;left:30px;letter-spacing:0px;">Index Offset</span>
<div class="a" style="left:177px;top:429px;width:94px;height:16px;background:#262626;border-radius:3px;"></div>
<span class="t" style="top:430.65px;line-height:14px;font-size:10.5px;color:#5e5e5e;left:181.5px;">#</span>
<span class="t" style="top:430.15px;line-height:16px;font-size:12px;color:#e6e6e6;left:194px;letter-spacing:0.1px;">0.0</span>
<div class="a" style="left:14.4px;top:454.5px;width:9.4px;height:9.4px;border-radius:5px;border:1.1px solid #777;"></div>
<span class="t" style="top:452.15px;line-height:16px;font-size:12px;color:#e6e6e6;left:30px;letter-spacing:0.2px;">Offset</span>
<div class="a" style="left:177px;top:451px;width:94px;height:16px;background:#262626;border-radius:3px;"></div>
<span class="t" style="top:452.65px;line-height:14px;font-size:10.5px;color:#5e5e5e;left:181.5px;">#</span>
<span class="t" style="top:452.15px;line-height:16px;font-size:12px;color:#e6e6e6;left:194px;letter-spacing:0.1px;">0.0</span>
<div class="a" style="left:14.4px;top:476.5px;width:9.4px;height:9.4px;border-radius:5px;border:1.1px solid #777;"></div>
<span class="t" style="top:474.15px;line-height:16px;font-size:12px;color:#8c8c8c;left:30px;letter-spacing:-0.48px;">Pass Value</span>
<div class="a" style="left:177px;top:473px;width:94px;height:16px;background:#262626;border-radius:3px;"></div>
<span class="t" style="top:474.65px;line-height:14px;font-size:10.5px;color:#5e5e5e;left:181.5px;">#</span>
<span class="t" style="top:474.15px;line-height:16px;font-size:12px;color:#8c8c8c;left:194px;letter-spacing:-0.06px;">1.0</span>
<div class="a" style="left:14.4px;top:498.5px;width:9.4px;height:9.4px;border-radius:5px;border:1.1px solid #777;"></div>
<span class="t" style="top:496.15px;line-height:16px;font-size:12px;color:#8c8c8c;left:30px;letter-spacing:-0.22px;">Fail Value</span>
<div class="a" style="left:177px;top:495px;width:94px;height:16px;background:#262626;border-radius:3px;"></div>
<span class="t" style="top:496.65px;line-height:14px;font-size:10.5px;color:#5e5e5e;left:181.5px;">#</span>
<span class="t" style="top:496.15px;line-height:16px;font-size:12px;color:#8c8c8c;left:194px;letter-spacing:0.1px;">0.0</span>
<div class="a" style="left:14.4px;top:520.5px;width:9.4px;height:9.4px;border-radius:5px;border:1.1px solid #777;"></div>
<span class="t" style="top:518.15px;line-height:16px;font-size:12px;color:#e6e6e6;left:30px;letter-spacing:-0.03px;">Custom Pattern</span>
<div class="a" style="left:177px;top:385.5px;width:193.5px;height:15px;background:#515151;border-radius:3px;"></div>
<span class="t" style="top:386.15px;line-height:16px;font-size:12px;color:#f0f0f0;left:180px;letter-spacing:-0.03px;">Custom Pattern</span>
<svg class="a" style="left:358px;top:391px;" width="8.5" height="5.5" viewBox="0 0 8.5 5.5"><path d="M0.5 0.5 L4.25 5.0 L8.0 0.5" fill="none" stroke="#e0e0e0" stroke-width="1.1"/></svg>
<div class="a" style="left:177px;top:516.5px;width:275px;height:17px;background:#262626;border-radius:3px;"></div>
<span class="t" style="top:518.45px;line-height:14px;font-size:10.5px;color:#5e5e5e;left:181.5px;">T</span>
<span class="t" style="top:518.15px;line-height:16px;font-size:12px;color:#f0f0f0;left:195px;letter-spacing:-0.4px;">2, 0.5, 0.5</span>
<div class="a" style="left:456px;top:516px;width:15.5px;height:16px;background:#333;border-radius:4px;box-shadow:inset 0 0 0 1px #262626;"></div>
<svg class="a" style="left:459px;top:519px;" width="10" height="10" viewBox="0 0 10 10"><path d="M5 0.5 V9.5 M0.5 5 H9.5" stroke="#f0f0f0" stroke-width="1.4"/></svg>
<div class="a" style="left:162px;top:509px;width:205.8px;height:32.9px;border:3px solid #b5e61d;"></div>
<svg class="a" width="0" height="0" style="left:0;top:0"><defs><linearGradient id="tg" x1="0" y1="0" x2="0" y2="1"><stop offset="0" stop-color="#f4f4f4"/><stop offset="1" stop-color="#c4c4c4"/></linearGradient></defs></svg>
<div class="a" style="left:493.5px;top:85px;width:30.5px;height:535px;background:#444444;border-radius:3px 3px 0 0;"></div>
<div class="a" style="left:503px;top:89.2px;width:2px;height:2px;background:#8a8a8a;"></div>
<div class="a" style="left:507.8px;top:89.2px;width:2px;height:2px;background:#8a8a8a;"></div>
<div class="a" style="left:512.6px;top:89.2px;width:2px;height:2px;background:#8a8a8a;"></div>
<div class="a" style="left:495.3px;top:96.3px;width:27.5px;height:27px;background:#222;border-radius:4px;"></div>
<svg class="a" style="left:498px;top:99px;" width="22" height="22" viewBox="0 0 22 22"><path d="M6.2 2.6 L6.2 17.2 L9.6 14.2 L11.9 19.4 L14.3 18.3 L12 13.2 L16.6 13 Z" fill="none" stroke="#2ecc71" stroke-width="1.2" stroke-linejoin="miter"/></svg>
<svg class="a" style="left:498px;top:129px;" width="22" height="22" viewBox="0 0 22 22"><path d="M5.8 0.8 L20 13 L6.2 20.6 Z" fill="url(#tg)"/></svg>
<svg class="a" style="left:498px;top:159px;" width="22" height="22" viewBox="0 0 22 22"><path d="M2.8 3.2 L12.4 5.4 L17.6 12.6 L13.2 16.6 L6 11.8 Z" fill="url(#tg)"/><path d="M14 17.6 L18.6 13.4 L20.4 15.4 L15.8 19.6 Z" fill="#cfcfcf"/><path d="M3.4 3.8 L10.6 10.6" stroke="#444" stroke-width="1"/><circle cx="11.2" cy="11.2" r="1.5" fill="#444"/></svg>
<svg class="a" style="left:498px;top:189px;" width="22" height="22" viewBox="0 0 22 22"><path d="M3.6 18.8 L5 14.6 L15.6 4 L18.6 7 L8 17.6 Z" fill="url(#tg)"/><path d="M16.4 3.2 a2.1 2.1 0 0 1 3 3 l-0.2 0.2 -3 -3 Z" fill="url(#tg)"/><path d="M2.6 20 L3.4 17.6 L5 19.2 Z" fill="#d8d8d8"/></svg>
<svg class="a" style="left:498px;top:219px;" width="22" height="22" viewBox="0 0 22 22"><rect x="1" y="6.2" width="13.6" height="11.6" rx="1.5" fill="url(#tg)"/><path d="M15 11.4 L21.4 6.4 V17.6 L15 12.8 Z" fill="url(#tg)"/><rect x="3.4" y="3.8" width="7.6" height="1.5" fill="url(#tg)"/><circle cx="4.6" cy="9.4" r="1.3" fill="#444"/></svg>
<svg class="a" style="left:498px;top:249px;" width="22" height="22" viewBox="0 0 22 22"><path d="M3 19 L19 3.4" stroke="#d8d8d8" stroke-width="1.2"/></svg>
<svg class="a" style="left:498px;top:279px;" width="22" height="22" viewBox="0 0 22 22"><path d="M4 3.4 H18.4 V6.6 H13 V19 H9.4 V6.6 H4 Z" fill="url(#tg)"/></svg>
<svg class="a" style="left:498px;top:309px;" width="22" height="22" viewBox="0 0 22 22"><path d="M11.8 3.2 L16.5 2.7 L19.6 19 L2.2 19 L4.2 13.4" fill="none" stroke="#d0d0d0" stroke-width="1" stroke-dasharray="2 1.5"/><path d="M3.2 2.7 L11.4 7.8 L5.3 12.9 Z" fill="url(#tg)"/><rect x="15.4" y="1.6" width="2.2" height="2.2" fill="url(#tg)"/><rect x="18.5" y="17.9" width="2.2" height="2.2" fill="url(#tg)"/><rect x="1.1" y="17.9" width="2.2" height="2.2" fill="url(#tg)"/></svg>
<svg class="a" style="left:498px;top:339px;" width="22" height="22" viewBox="0 0 22 22"><rect x="4" y="4" width="14.4" height="14.4" fill="url(#tg)"/></svg>
<svg class="a" style="left:498px;top:369px;" width="22" height="22" viewBox="0 0 22 22"><circle cx="11" cy="11" r="8" fill="url(#tg)"/></svg>
<svg class="a" style="left:498px;top:399px;" width="22" height="22" viewBox="0 0 22 22"><path d="M11 2.6 L19.6 9 L16.4 19 H5.6 L2.4 9 Z" fill="url(#tg)"/></svg>
<svg class="a" style="left:498px;top:429px;" width="22" height="22" viewBox="0 0 22 22"><path d="M11 1.6 L13.4 8.4 L20.6 8.6 L14.9 13 L17 19.8 L11 15.8 L5 19.8 L7.1 13 L1.4 8.6 L8.6 8.4 Z" fill="url(#tg)"/></svg>
<svg class="a" style="left:498px;top:459px;" width="22" height="22" viewBox="0 0 22 22"><path d="M11.4 17.3 A6.4 6.4 0 1 1 17.3 11.6" fill="none" stroke="url(#tg)" stroke-width="3.2"/></svg>
<svg class="a" style="left:498px;top:489px;" width="22" height="22" viewBox="0 0 22 22"><path d="M11 2 C11.8 7.6 14.4 10.2 20 11 C14.4 11.8 11.8 14.4 11 20 C10.2 14.4 7.6 11.8 2 11 C7.6 10.2 10.2 7.6 11 2 Z" fill="url(#tg)"/></svg>
<svg class="a" style="left:498px;top:519px;" width="22" height="22" viewBox="0 0 22 22"><path fill-rule="evenodd" d="M19.43 9.29 L19.43 12.71 L16.89 12.95 L16.54 13.78 L18.17 15.75 L15.75 18.17 L13.78 16.54 L12.95 16.89 L12.71 19.43 L9.29 19.43 L9.05 16.89 L8.22 16.54 L6.25 18.17 L3.83 15.75 L5.46 13.78 L5.11 12.95 L2.57 12.71 L2.57 9.29 L5.11 9.05 L5.46 8.22 L3.83 6.25 L6.25 3.83 L8.22 5.46 L9.05 5.11 L9.29 2.57 L12.71 2.57 L12.95 5.11 L13.78 5.46 L15.75 3.83 L18.17 6.25 L16.54 8.22 L16.89 9.05 Z M11 7.9 a3.1 3.1 0 1 0 0.01 0 Z" fill="url(#tg)"/></svg>
<svg class="a" style="left:498px;top:549px;" width="22" height="22" viewBox="0 0 22 22"><path d="M0.6 11 L6.4 5.6 V9.4 H15.6 V5.6 L21.4 11 L15.6 16.4 V12.6 H6.4 V16.4 Z" fill="url(#tg)"/></svg>
<svg class="a" style="left:503.5px;top:605.5px;" width="12" height="10" viewBox="0 0 12 10"><path d="M0.8 0.8 L5 5 L0.8 9.2 M6.4 0.8 L10.6 5 L6.4 9.2" fill="none" stroke="#9a9a9a" stroke-width="1.1"/></svg>
<div class="a" style="left:530px;top:85px;width:160px;height:23px;background:#444444;border-radius:4px 4px 0 0;"></div>
<span class="t" style="top:88.65px;line-height:16px;font-size:12px;color:#e6e6e6;left:535.5px;letter-spacing:-0.09px;">background grid animation 1</span>
<div class="a" style="left:530px;top:107px;width:1057px;height:491px;background:#000;"></div>
<div class="a" style="left:732.3px;top:154px;width:755.4px;height:425.2px;background:linear-gradient(90deg, rgba(14,10,10,0.55) 0%, rgba(14,10,10,0) 14%, rgba(14,10,10,0) 86%, rgba(14,10,10,0.55) 100%), radial-gradient(ellipse 590px 290px at 50% 50%, #24542f 0%, #24542f 12%, #245235 17%, #234f40 23%, #224747 29%, #213c47 35%, #202e40 42%, #1f2336 50%, #1e1d2c 58%, #1d1922 68%, #1a1519 78%, #141113 90%, #090909 100%);overflow:hidden;"></div>
<svg class="a" style="left:732.3px;top:154px;overflow:hidden" width="755.4" height="425.2" viewBox="0 0 755.4 425.2"><defs><pattern id="gp" x="0.33" y="4.88" width="15.735" height="15.735" patternUnits="userSpaceOnUse"><path d="M7.8675 0 V15.735 M0 7.8675 H15.735" stroke="#86b070" stroke-opacity="0.14" stroke-width="0.8"/><path d="M5.5675 7.8675 h4.6 M7.8675 5.5675 v4.6" stroke="#62c46c" stroke-opacity="0.45" stroke-width="0.9"/><circle cx="7.8675" cy="7.8675" r="1" fill="#60c06a"/></pattern></defs><rect x="0" y="0" width="755.4" height="425.2" fill="url(#gp)"/><path d="M39.67 0 V425.2 M86.88 0 V425.2 M134.08 0 V425.2 M181.29 0 V425.2 M228.49 0 V425.2 M275.7 0 V425.2 M322.9 0 V425.2 M370.11 0 V425.2 M417.31 0 V425.2 M464.52 0 V425.2 M511.72 0 V425.2 M558.93 0 V425.2 M606.13 0 V425.2 M653.34 0 V425.2 M700.54 0 V425.2 M747.75 0 V425.2 M0 12.75 H755.4 M0 59.95 H755.4 M0 107.16 H755.4 M0 154.36 H755.4 M0 201.57 H755.4 M0 248.77 H755.4 M0 295.98 H755.4 M0 343.19 H755.4 M0 390.39 H755.4" stroke="#94b066" stroke-opacity="0.33" stroke-width="1" fill="none"/></svg>
<span class="t" style="top:575.65px;line-height:16px;font-size:12px;color:#dcdcdc;left:569.6px;letter-spacing:0.21px;">00:00:07:11</span>
<span class="t" style="top:575.65px;line-height:16px;font-size:12px;color:#dcdcdc;left:1034px;letter-spacing:-0.43px;">FPS: 9.64</span>
<span class="t" style="top:575.65px;line-height:16px;font-size:12px;color:#dcdcdc;left:1527.5px;letter-spacing:-0.01px;">221</span>
<div class="a" style="left:530px;top:596px;width:938px;height:2px;background:#d9bd62;"></div>
<div class="a" style="left:530px;top:598px;width:1057px;height:22px;background:#444444;"></div>
<div class="a" style="left:535.3px;top:601px;width:77.5px;height:16px;background:#2e2e2e;border-radius:3px;"></div>
<span class="t" style="top:601.35px;line-height:16px;font-size:12px;color:#e6e6e6;left:538.6px;letter-spacing:-0.48px;">39%</span>
<svg class="a" style="left:600.5px;top:606.3px;" width="8.5" height="5.5" viewBox="0 0 8.5 5.5"><path d="M0.5 0.5 L4.25 5.0 L8.0 0.5" fill="none" stroke="#d0d0d0" stroke-width="1.1"/></svg>
<div class="a" style="left:866px;top:599.7px;width:100.3px;height:18.8px;background:#2a2a2a;border-radius:4px;box-shadow:inset 0 0 0 1px #4a4a4a;"></div>
<div class="a" style="left:885.56px;top:600.5px;width:1px;height:17.2px;background:#444;"></div>
<div class="a" style="left:905.62px;top:600.5px;width:1px;height:17.2px;background:#444;"></div>
<div class="a" style="left:925.68px;top:600.5px;width:1px;height:17.2px;background:#444;"></div>
<div class="a" style="left:945.74px;top:600.5px;width:1px;height:17.2px;background:#444;"></div>
<svg class="a" style="left:866px;top:600px;" width="20" height="18" viewBox="0 0 20 18"><path d="M4.6 4.4 V13.6" stroke="#ececec" stroke-width="1.5"/><path d="M14.4 4.2 V13.8 L6.8 9 Z" fill="#ececec"/></svg>
<svg class="a" style="left:886.06px;top:600px;" width="20" height="18" viewBox="0 0 20 18"><path d="M15.2 4.4 V13.6" stroke="#ececec" stroke-width="1.6"/><path d="M12.6 4.2 V13.8 L4.6 9 Z" fill="#ececec"/></svg>
<svg class="a" style="left:906.12px;top:600px;" width="20" height="18" viewBox="0 0 20 18"><path d="M7.6 4.4 V13.6 M12.4 4.4 V13.6" stroke="#ececec" stroke-width="1.9"/></svg>
<svg class="a" style="left:926.18px;top:600px;" width="20" height="18" viewBox="0 0 20 18"><path d="M4.8 4.4 V13.6" stroke="#ececec" stroke-width="1.6"/><path d="M7.4 4.2 V13.8 L15.4 9 Z" fill="#ececec"/></svg>
<svg class="a" style="left:946.24px;top:600px;" width="20" height="18" viewBox="0 0 20 18"><path d="M15.4 4.4 V13.6" stroke="#ececec" stroke-width="1.5"/><path d="M5.6 4.2 V13.8 L13.2 9 Z" fill="#ececec"/></svg>
<div class="a" style="left:970.6px;top:599.7px;width:20.2px;height:18.8px;background:#2a2a2a;border-radius:4px;box-shadow:inset 0 0 0 1px #4a4a4a;"></div>
<svg class="a" style="left:971px;top:600px;" width="20" height="18" viewBox="0 0 20 18"><path d="M4.2 12.6 V6.8 H14.4 V13.4 H4.2" fill="none" stroke="#ececec" stroke-width="1.3"/><path d="M9.6 2.6 L12.6 5 L9.6 7.4" fill="none" stroke="#ececec" stroke-width="1.3"/><path d="M6 6.8 V5 H12" stroke="#ececec" stroke-width="1.3" fill="none"/></svg>
<div class="a" style="left:1232px;top:599.7px;width:37.5px;height:18.8px;background:#2c2c2c;border-radius:4px;"></div>
<svg class="a" style="left:1234.6px;top:604.6px;" width="14" height="9" viewBox="0 0 14 9"><path d="M0.2 4.4 L3.4 0.5 H13 a0.7 0.7 0 0 1 0.7 0.7 V7.6 a0.7 0.7 0 0 1 -0.7 0.7 H3.4 Z" fill="#dcdcdc"/><circle cx="4.2" cy="4.4" r="1.25" fill="#262626"/></svg>
<span class="t" style="top:601.55px;line-height:16px;font-size:12px;color:#8f8f8f;left:1258px;">0</span>
<div class="a" style="left:1272.2px;top:599.6px;width:31.2px;height:18.8px;background:#2b2b2b;border-radius:4px;box-shadow:inset 0 0 0 1px #3c3c3c;"></div>
<div class="a" style="left:1272.8px;top:600.2px;width:18.4px;height:17.6px;background:#242424;border-radius:3.5px 0 0 3.5px;"></div>
<div class="a" style="left:1291.2px;top:600.2px;width:0.9px;height:17.6px;background:#505050;"></div>
<svg class="a" style="left:1272.2px;top:600px;" width="31" height="18" viewBox="0 0 31 18"><path d="M2.6 7 H5 L8.4 4 V14.4 L5 11.4 H2.6 Z" fill="#2ecc71"/><path d="M10.2 6.6 A3.6 3.6 0 0 1 10.2 11.8 M12 4.6 A6.4 6.4 0 0 1 12 13.8 M13.8 2.8 A9 9 0 0 1 13.8 15.6" fill="none" stroke="#2ecc71" stroke-width="1.2"/><path d="M22.8 6.2 L27.2 9.2 L22.8 12.2 Z" fill="none" stroke="#8a8a8a" stroke-width="1"/></svg>
<div class="a" style="left:1307.4px;top:599.6px;width:31.2px;height:18.8px;background:#2b2b2b;border-radius:4px;box-shadow:inset 0 0 0 1px #3c3c3c;"></div>
<div class="a" style="left:1308px;top:600.2px;width:18.4px;height:17.6px;background:#484848;border-radius:3.5px 0 0 3.5px;"></div>
<div class="a" style="left:1326.4px;top:600.2px;width:0.9px;height:17.6px;background:#505050;"></div>
<svg class="a" style="left:1307.4px;top:600px;" width="31" height="18" viewBox="0 0 31 18"><path d="M8.9 14.2 L5 9.6 A4.4 4.4 0 0 1 12.2 5.4 L14.2 9.4" fill="none" stroke="#dcdcdc" stroke-width="2.5"/><path d="M22.8 6.2 L27.2 9.2 L22.8 12.2 Z" fill="none" stroke="#8a8a8a" stroke-width="1"/></svg>
<div class="a" style="left:1342.5px;top:599.6px;width:31.2px;height:18.8px;background:#2b2b2b;border-radius:4px;box-shadow:inset 0 0 0 1px #3c3c3c;"></div>
<div class="a" style="left:1343.1px;top:600.2px;width:18.4px;height:17.6px;background:#484848;border-radius:3.5px 0 0 3.5px;"></div>
<div class="a" style="left:1361.5px;top:600.2px;width:0.9px;height:17.6px;background:#505050;"></div>
<svg class="a" style="left:1342.5px;top:600px;" width="31" height="18" viewBox="0 0 31 18"><path d="M6.6 2.4 V16 M12.4 2.4 V16 M2.4 6.4 H16.6 M2.4 12 H16.6" stroke="#ececec" stroke-width="1.1"/><path d="M22.8 6.2 L27.2 9.2 L22.8 12.2 Z" fill="none" stroke="#8a8a8a" stroke-width="1"/></svg>
<div class="a" style="left:1377.4px;top:599.6px;width:19.4px;height:18.8px;background:#424242;border-radius:4px;box-shadow:inset 0 0 0 1px #383838;"></div>
<svg class="a" style="left:1377.4px;top:600px;" width="19.4" height="18" viewBox="0 0 19.4 18"><rect x="2.6" y="3.4" width="3.4" height="11.6" fill="#2ecc71"/><rect x="7.8" y="4" width="8.4" height="4.6" fill="none" stroke="#2ecc71" stroke-width="1.3"/><rect x="7.2" y="11" width="9.6" height="4" fill="#2ecc71"/></svg>
<div class="a" style="left:1400.3px;top:599.6px;width:19.4px;height:18.8px;background:#424242;border-radius:4px;box-shadow:inset 0 0 0 1px #383838;"></div>
<svg class="a" style="left:1400.3px;top:600px;" width="19.4" height="18" viewBox="0 0 19.4 18"><path d="M3.4 4.8 L8 9.2 L3.4 13.6 Z" fill="#dcdcdc"/><path d="M8 4.8 L12.4 9.2 L8 13.6 M12 4.8 L16.4 9.2 L12 13.6" fill="none" stroke="#dcdcdc" stroke-width="1.5"/></svg>
<div class="a" style="left:1423.3px;top:599.6px;width:31.2px;height:18.8px;background:#2b2b2b;border-radius:4px;box-shadow:inset 0 0 0 1px #3c3c3c;"></div>
<div class="a" style="left:1423.9px;top:600.2px;width:18.4px;height:17.6px;background:#484848;border-radius:3.5px 0 0 3.5px;"></div>
<div class="a" style="left:1442.3px;top:600.2px;width:0.9px;height:17.6px;background:#505050;"></div>
<svg class="a" style="left:1423.3px;top:600px;" width="31" height="18" viewBox="0 0 31 18"><rect x="3.2" y="3.8" width="12.8" height="10.8" fill="none" stroke="#ececec" stroke-width="1.3"/><rect x="3.2" y="12" width="12.8" height="2.6" fill="#ececec"/><path d="M22.8 6.2 L27.2 9.2 L22.8 12.2 Z" fill="none" stroke="#8a8a8a" stroke-width="1"/></svg>
<div class="a" style="left:1458.4px;top:599.6px;width:31.2px;height:18.8px;background:#2b2b2b;border-radius:4px;box-shadow:inset 0 0 0 1px #3c3c3c;"></div>
<div class="a" style="left:1459px;top:600.2px;width:18.4px;height:17.6px;background:#484848;border-radius:3.5px 0 0 3.5px;"></div>
<div class="a" style="left:1477.4px;top:600.2px;width:0.9px;height:17.6px;background:#505050;"></div>
<svg class="a" style="left:1458.4px;top:600px;" width="31" height="18" viewBox="0 0 31 18"><rect x="3" y="3.4" width="8.2" height="6" fill="none" stroke="#c8c8c8" stroke-width="1.2"/><path d="M5.6 11.4 H13.4 V5.8 M8.2 13.4 H15.6 V8 M10.6 15.4 H17.6 V10" fill="none" stroke="#a8a8a8" stroke-width="1"/><path d="M22.8 6.2 L27.2 9.2 L22.8 12.2 Z" fill="none" stroke="#8a8a8a" stroke-width="1"/></svg>
<div class="a" style="left:1493.2px;top:599.6px;width:31.2px;height:18.8px;background:#2b2b2b;border-radius:4px;box-shadow:inset 0 0 0 1px #3c3c3c;"></div>
<div class="a" style="left:1493.8px;top:600.2px;width:18.4px;height:17.6px;background:#484848;border-radius:3.5px 0 0 3.5px;"></div>
<div class="a" style="left:1512.2px;top:600.2px;width:0.9px;height:17.6px;background:#505050;"></div>
<svg class="a" style="left:1493.2px;top:600px;" width="31" height="18" viewBox="0 0 31 18"><rect x="2.8" y="2.6" width="9" height="9" fill="#cfcfcf"/><rect x="7.4" y="7" width="8.6" height="8.6" fill="#484848" stroke="#ececec" stroke-width="1.3"/><path d="M22.8 6.2 L27.2 9.2 L22.8 12.2 Z" fill="none" stroke="#8a8a8a" stroke-width="1"/></svg>
<div class="a" style="left:1528.2px;top:599.6px;width:31.2px;height:18.8px;background:#2b2b2b;border-radius:4px;box-shadow:inset 0 0 0 1px #3c3c3c;"></div>
<div class="a" style="left:1528.8px;top:600.2px;width:18.4px;height:17.6px;background:#242424;border-radius:3.5px 0 0 3.5px;"></div>
<div class="a" style="left:1547.2px;top:600.2px;width:0.9px;height:17.6px;background:#505050;"></div>
<svg class="a" style="left:1528.2px;top:600px;" width="31" height="18" viewBox="0 0 31 18"><rect x="3.4" y="3.0" width="3.1" height="3.1" fill="#2ecc71"/><rect x="3.4" y="9.2" width="3.1" height="3.1" fill="#2ecc71"/><rect x="6.5" y="6.1" width="3.1" height="3.1" fill="#2ecc71"/><rect x="6.5" y="12.3" width="3.1" height="3.1" fill="#2ecc71"/><rect x="9.6" y="3.0" width="3.1" height="3.1" fill="#2ecc71"/><rect x="9.6" y="9.2" width="3.1" height="3.1" fill="#2ecc71"/><rect x="12.700000000000001" y="6.1" width="3.1" height="3.1" fill="#2ecc71"/><rect x="12.700000000000001" y="12.3" width="3.1" height="3.1" fill="#2ecc71"/><path d="M22.8 6.2 L27.2 9.2 L22.8 12.2 Z" fill="none" stroke="#8a8a8a" stroke-width="1"/></svg>
<div class="a" style="left:1563.3px;top:599.6px;width:19.4px;height:18.8px;background:#2a2a2a;border-radius:4px;box-shadow:inset 0 0 0 1px #383838;"></div>
<svg class="a" style="left:1563.3px;top:600px;" width="19.4" height="18" viewBox="0 0 19.4 18"><path fill-rule="evenodd" d="M16.46 7.83 L16.46 10.57 L14.45 10.77 L14.17 11.44 L15.45 13.01 L13.51 14.95 L11.94 13.67 L11.27 13.95 L11.07 15.96 L8.33 15.96 L8.13 13.95 L7.46 13.67 L5.89 14.95 L3.95 13.01 L5.23 11.44 L4.95 10.77 L2.94 10.57 L2.94 7.83 L4.95 7.63 L5.23 6.96 L3.95 5.39 L5.89 3.45 L7.46 4.73 L8.13 4.45 L8.33 2.44 L11.07 2.44 L11.27 4.45 L11.94 4.73 L13.51 3.45 L15.45 5.39 L14.17 6.96 L14.45 7.63 Z M9.7 6.699999999999999 a2.5 2.5 0 1 0 0.01 0 Z" fill="#ececec"/></svg>
<div class="a" style="left:1593px;top:85px;width:39.5px;height:23px;background:#444444;border-radius:4px 4px 0 0;"></div>
<span class="t" style="top:88.85px;line-height:16px;font-size:12px;color:#e6e6e6;left:1598px;letter-spacing:0.16px;">Color</span>
<div class="a" style="left:1634px;top:85px;width:69px;height:22px;background:#242424;border-radius:4px 4px 0 0;"></div>
<span class="t" style="top:88.85px;line-height:16px;font-size:12px;color:#e6e6e6;left:1639.5px;letter-spacing:-0.27px;">Add Layers</span>
<div class="a" style="left:1593px;top:107px;width:307px;height:417px;background:#444444;"></div>
<div class="a" style="left:1900px;top:107px;width:14px;height:417px;background:#2c2c2c;"></div>
<div class="a" style="left:1902px;top:108.5px;width:10px;height:368px;background:#555;border-radius:5px;"></div>
<div class="a" style="left:1644.8px;top:118.8px;width:202px;height:202px;background:conic-gradient(from 90deg, #ff0000, #ff00ff, #0000ff, #00ffff, #00ff00, #ffff00, #ff0000);-webkit-mask:radial-gradient(circle closest-side, transparent 73.8px, #000 74.8px, #000 99.5px, transparent 100.5px);mask:radial-gradient(circle closest-side, transparent 73.8px, #000 74.8px, #000 99.5px, transparent 100.5px);"></div>
<div class="a" style="left:1702px;top:175.7px;width:90.3px;height:90.3px;background:linear-gradient(to right, #000 0%, rgba(0,0,0,0) 100%), linear-gradient(to bottom, #fff 0%, #f00 100%);"></div>
<div class="a" style="left:1730.8px;top:169.7px;width:12.6px;height:12.6px;border-radius:7px;border:1.2px solid #f4f4f4;"></div>
<div class="a" style="left:1826.5px;top:213.7px;width:12.6px;height:12.6px;background:#ff0000;border-radius:7px;border:1.2px solid #f4f4f4;"></div>
<div class="a" style="left:1600px;top:333px;width:22.3px;height:22px;background:#646464;border-radius:3px;"></div>
<span class="t" style="top:337.15px;line-height:16px;font-size:12px;color:#e6e6e6;left:1625px;letter-spacing:-0.08px;">Dim Gray</span>
<div class="a" style="left:1871px;top:333px;width:22px;height:22px;background:#222;border-radius:4px;box-shadow:inset 0 0 0 1px #333;"></div>
<svg class="a" style="left:1876px;top:338px;" width="12" height="12" viewBox="0 0 12 12"><path d="M1 11 L1.6 9 L6.6 4 L8 5.4 L3 10.4 Z" fill="none" stroke="#d8d8d8" stroke-width="1"/><path d="M6 2.8 L9.2 6 M7.2 4.8 L9.6 2.4" stroke="#d8d8d8" stroke-width="2.6" stroke-linecap="round"/></svg>
<div class="a" style="left:1600px;top:360.5px;width:49.5px;height:17.5px;background:#464646;border-radius:3px;box-shadow:inset 0 0 0 1px #5c5c5c;"></div>
<span class="t" style="top:361.75px;line-height:16px;font-size:12px;color:#e6e6e6;left:1603px;letter-spacing:-0.11px;">Hex</span>
<svg class="a" style="left:1636.5px;top:367px;" width="8.5" height="5.5" viewBox="0 0 8.5 5.5"><path d="M0.5 0.5 L4.25 5.0 L8.0 0.5" fill="none" stroke="#d8d8d8" stroke-width="1.1"/></svg>
<div class="a" style="left:1653px;top:358px;width:240px;height:22px;background:#222;border-radius:3px;"></div>
<span class="t" style="top:362.85px;line-height:14px;font-size:10.5px;color:#5a5a5a;left:1658px;">#</span>
<span class="t" style="top:361.85px;line-height:16px;font-size:12px;color:#e6e6e6;left:1670px;letter-spacing:0.33px;">646464</span>
<div class="a" style="left:1600px;top:390px;width:238px;height:4px;background:#f2f2f2;border-radius:2px;"></div>
<div class="a" style="left:1828.4px;top:386.4px;width:11.2px;height:11.2px;background:#74c9ab;border-radius:6px;"></div>
<div class="a" style="left:1831.8px;top:389.8px;width:4.4px;height:4.4px;background:#4ea088;border-radius:3px;"></div>
<div class="a" style="left:1849px;top:384px;width:44px;height:16px;background:#262626;border-radius:3px;"></div>
<span class="t" style="top:384.65px;line-height:16px;font-size:12px;color:#555;left:1853px;">A</span>
<span class="t" style="top:384.45px;line-height:16px;font-size:12px;color:#e6e6e6;left:1866px;letter-spacing:0.32px;">255</span>
<div class="a" style="left:1597px;top:406px;width:299px;height:22px;background:#262626;"></div>
<div class="a" style="left:1599px;top:407.5px;width:148px;height:20.5px;background:#444444;border-radius:4px 4px 0 0;"></div>
<span class="t" style="top:409.95px;line-height:16px;font-size:12px;color:#f0f0f0;left:1648px;letter-spacing:-0.25px;">Swatches</span>
<span class="t" style="top:409.95px;line-height:16px;font-size:12px;color:#b8b8b8;left:1793px;letter-spacing:0.11px;">Generator</span>
<div class="a" style="left:1598px;top:431.4px;width:257px;height:17px;background:#535353;border-radius:3px;"></div>
<div class="a" style="left:1599px;top:431.9px;width:62px;height:16px;background:#222;border-radius:3px;"></div>
<svg class="a" style="left:1605px;top:434.4px;" width="12" height="11" viewBox="0 0 12 11"><path d="M1.4 0.5 V10.5 M5 0.5 V10.5" stroke="#2ecc71" stroke-width="1.8"/><path d="M8 0.8 L10.8 10.2" stroke="#2ecc71" stroke-width="1.8"/></svg>
<span class="t" style="top:432.95px;line-height:16px;font-size:12px;color:#f0f0f0;left:1621px;letter-spacing:0.12px;">Library</span>
<svg class="a" style="left:1671px;top:434.4px;" width="11" height="11" viewBox="0 0 11 11"><path d="M0.6 10.4 V1.2 H4 L4.8 2.4 H10.4 V10.4 Z" fill="none" stroke="#d8d8d8" stroke-width="1.1"/><path d="M2.6 5 H8.4 M2.6 7.4 H8.4" stroke="#d8d8d8" stroke-width="1.2"/></svg>
<span class="t" style="top:432.95px;line-height:16px;font-size:12px;color:#e6e6e6;left:1686px;letter-spacing:0.09px;">Project</span>
<svg class="a" style="left:1738px;top:434.4px;" width="9" height="11" viewBox="0 0 9 11"><path d="M0.6 0.6 H5.4 L8.4 3.6 V10.4 H0.6 Z M5.2 0.8 V3.8 H8.2" fill="none" stroke="#d8d8d8" stroke-width="1.1"/></svg>
<span class="t" style="top:432.95px;line-height:16px;font-size:12px;color:#e6e6e6;left:1752px;letter-spacing:-0.61px;">Scene</span>
<svg class="a" style="left:1801px;top:434.4px;" width="11" height="11" viewBox="0 0 11 11"><path d="M2.4 0.6 H8.6 a1.8 1.8 0 0 1 1.8 1.8 V6 L6 10.4 H2.4 a1.8 1.8 0 0 1 -1.8 -1.8 V2.4 a1.8 1.8 0 0 1 1.8 -1.8 Z M10.2 6 H7.6 a1.6 1.6 0 0 0 -1.6 1.6 V10.2" fill="none" stroke="#d8d8d8" stroke-width="1.1"/></svg>
<span class="t" style="top:432.95px;line-height:16px;font-size:12px;color:#e6e6e6;left:1816px;letter-spacing:-0.31px;">Labels</span>
<div class="a" style="left:1858px;top:431.4px;width:37.5px;height:17px;background:#535353;border-radius:3px;"></div>
<div class="a" style="left:1859px;top:431.9px;width:16.5px;height:16px;background:#222;border-radius:3px;"></div>
<svg class="a" style="left:1862.5px;top:435.4px;" width="9" height="9" viewBox="0 0 9 9"><rect x="0.4" y="0.4" width="3.2" height="3.2" rx="0.6" fill="#2ecc71"/><rect x="0.4" y="5.2" width="3.2" height="3.2" rx="0.6" fill="#2ecc71"/><rect x="5.2" y="0.4" width="3.2" height="3.2" rx="0.6" fill="#2ecc71"/><rect x="5.2" y="5.2" width="3.2" height="3.2" rx="0.6" fill="#2ecc71"/></svg>
<svg class="a" style="left:1880.5px;top:435.4px;" width="11" height="9" viewBox="0 0 11 9"><path d="M0 1 H11 M0 4.5 H11 M0 8 H11" stroke="#d8d8d8" stroke-width="1.1"/></svg>
<div class="a" style="left:1598px;top:453px;width:275.5px;height:16px;background:#515151;border-radius:3px;"></div>
<span class="t" style="top:453.95px;line-height:16px;font-size:12px;color:#f0f0f0;left:1601px;letter-spacing:0.16px;">new</span>
<svg class="a" style="left:1860.5px;top:458.5px;" width="8.5" height="5.5" viewBox="0 0 8.5 5.5"><path d="M0.5 0.5 L4.25 5.0 L8.0 0.5" fill="none" stroke="#e0e0e0" stroke-width="1.1"/></svg>
<div class="a" style="left:1880px;top:460.4px;width:2px;height:1.6px;background:#d8d8d8;"></div>
<div class="a" style="left:1885px;top:460.4px;width:2px;height:1.6px;background:#d8d8d8;"></div>
<div class="a" style="left:1890px;top:460.4px;width:2px;height:1.6px;background:#d8d8d8;"></div>
<div class="a" style="left:1598px;top:470px;width:297.5px;height:54px;background:#262626;"></div>
<div class="a" style="left:1600px;top:472px;width:18px;height:18px;background:#8c52ff;border-radius:3.5px;"></div>
<div class="a" style="left:1622px;top:472px;width:18px;height:18px;background:#4da3ff;border-radius:3.5px;"></div>
<div class="a" style="left:1644px;top:472px;width:18px;height:18px;background:#ff7752;border-radius:3.5px;"></div>
<div class="a" style="left:1666px;top:472px;width:18px;height:18px;background:#52ffb4;border-radius:3.5px;"></div>
<div class="a" style="left:1688px;top:472px;width:18px;height:18px;background:#ff4d5e;border-radius:3.5px;"></div>
<div class="a" style="left:1710px;top:472px;width:18px;height:18px;background:#ff52bd;border-radius:3.5px;"></div>
<div class="a" style="left:1732px;top:472px;width:18px;height:18px;background:#ffd24d;border-radius:3.5px;"></div>
<div class="a" style="left:1754px;top:472px;width:18px;height:18px;background:#4065d8;border-radius:3.5px;"></div>
<div class="a" style="left:1776px;top:472px;width:18px;height:18px;background:#5ce6d6;border-radius:3.5px;"></div>
<div class="a" style="left:1798px;top:472px;width:18px;height:18px;background:#d880d8;border-radius:3.5px;"></div>
<div class="a" style="left:1820px;top:472px;width:18px;height:18px;background:#b0ec86;border-radius:3.5px;"></div>
<div class="a" style="left:1842px;top:472px;width:18px;height:18px;background:#664dff;border-radius:3.5px;"></div>
<div class="a" style="left:1593px;top:530px;width:38px;height:23px;background:#444444;border-radius:4px 4px 0 0;"></div>
<span class="t" style="top:533.65px;line-height:16px;font-size:12px;color:#e6e6e6;left:1598.5px;letter-spacing:0.06px;">Align</span>
<div class="a" style="left:1593px;top:552px;width:321px;height:67.8px;background:#444444;"></div>
<span class="t" style="top:563.95px;line-height:16px;font-size:12px;color:#e6e6e6;left:1601px;letter-spacing:0.07px;">Alignment</span>
<span class="t" style="top:592.15px;line-height:16px;font-size:12px;color:#e6e6e6;left:1601px;letter-spacing:0.29px;">Distribution</span>
<div class="a" style="left:1790.3px;top:563px;width:53.4px;height:17.4px;background:#242424;border-radius:4px;box-shadow:inset 0 0 0 1px #505050;"></div>
<svg class="a" style="left:1790.3px;top:563px;" width="17.8" height="17.4" viewBox="0 0 17.8 17.4"><path d="M3.4 3 V14.4 M5.6 6 H10.4 M5.6 11.2 H14.4" stroke="#ececec" stroke-width="1.6" fill="none"/></svg>
<div class="a" style="left:1807.6px;top:563.8px;width:1px;height:15.8px;background:#505050;"></div>
<svg class="a" style="left:1808.1px;top:563px;" width="17.8" height="17.4" viewBox="0 0 17.8 17.4"><path d="M8.9 2.6 V14.8 M5.4 6 H12.4 M3.4 11.2 H14.4" stroke="#ececec" stroke-width="1.6" fill="none"/></svg>
<div class="a" style="left:1825.4px;top:563.8px;width:1px;height:15.8px;background:#505050;"></div>
<svg class="a" style="left:1825.9px;top:563px;" width="17.8" height="17.4" viewBox="0 0 17.8 17.4"><path d="M14.4 3 V14.4 M7.4 6 H12.2 M3.4 11.2 H12.2" stroke="#ececec" stroke-width="1.6" fill="none"/></svg>
<div class="a" style="left:1852.3px;top:563px;width:53.4px;height:17.4px;background:#242424;border-radius:4px;box-shadow:inset 0 0 0 1px #505050;"></div>
<svg class="a" style="left:1852.3px;top:563px;" width="17.8" height="17.4" viewBox="0 0 17.8 17.4"><path d="M2.8 3.2 H15 M6.4 5.2 V14.4 M11.4 5.2 V9.6" stroke="#ececec" stroke-width="1.6" fill="none"/></svg>
<div class="a" style="left:1869.6px;top:563.8px;width:1px;height:15.8px;background:#505050;"></div>
<svg class="a" style="left:1870.1px;top:563px;" width="17.8" height="17.4" viewBox="0 0 17.8 17.4"><path d="M2.8 8.7 H15 M6.4 3 V14.4 M11.4 5.6 V11.8" stroke="#ececec" stroke-width="1.6" fill="none"/></svg>
<div class="a" style="left:1887.4px;top:563.8px;width:1px;height:15.8px;background:#505050;"></div>
<svg class="a" style="left:1887.9px;top:563px;" width="17.8" height="17.4" viewBox="0 0 17.8 17.4"><path d="M2.8 14.2 H15 M6.4 7.8 V12.2 M11.4 3 V12.2" stroke="#ececec" stroke-width="1.6" fill="none"/></svg>
<div class="a" style="left:1790.3px;top:591px;width:53.4px;height:17.4px;background:#242424;border-radius:4px;box-shadow:inset 0 0 0 1px #505050;"></div>
<svg class="a" style="left:1790.3px;top:591px;" width="17.8" height="17.4" viewBox="0 0 17.8 17.4"><path d="M3 2.6 V14.8 M14.8 2.6 V14.8" stroke="#ececec" stroke-width="1" fill="none"/><path d="M8.9 3.6 V13.8" stroke="#ececec" stroke-width="2.2"/></svg>
<div class="a" style="left:1807.6px;top:591.8px;width:1px;height:15.8px;background:#505050;"></div>
<svg class="a" style="left:1808.1px;top:591px;" width="17.8" height="17.4" viewBox="0 0 17.8 17.4"><path d="M2.8 3 H15 M2.8 14.4 H15" stroke="#ececec" stroke-width="1" fill="none"/><path d="M4.6 8.7 H13.2" stroke="#ececec" stroke-width="2"/></svg>
<div class="a" style="left:1825.4px;top:591.8px;width:1px;height:15.8px;background:#505050;"></div>
<svg class="a" style="left:1825.9px;top:591px;" width="17.8" height="17.4" viewBox="0 0 17.8 17.4"><rect x="2.6" y="2.8" width="12.6" height="11.8" fill="none" stroke="#ececec" stroke-width="1" stroke-dasharray="2.4 1.8"/><path d="M5.4 12.6 V10.6 M8.9 10 V7.6 M12.4 7 V4.8" stroke="#ececec" stroke-width="1.8"/></svg>
<div class="a" style="left:494px;top:627px;width:89px;height:22px;background:#444444;border-radius:4px 4px 0 0;"></div>
<span class="t" style="top:630.15px;line-height:16px;font-size:12px;color:#e6e6e6;left:499.5px;letter-spacing:-0.17px;">Scene Window</span>
<div class="a" style="left:585px;top:627px;width:98.5px;height:21px;background:#242424;border-radius:4px 4px 0 0;"></div>
<span class="t" style="top:630.15px;line-height:16px;font-size:12px;color:#e6e6e6;left:589px;letter-spacing:-0.07px;">JavaScript Editor</span>
<div class="a" style="left:685px;top:627px;width:112px;height:21px;background:#242424;border-radius:4px 4px 0 0;"></div>
<span class="t" style="top:630.15px;line-height:16px;font-size:12px;color:#e6e6e6;left:690.5px;letter-spacing:-0.19px;">Dependency Graph</span>
<div class="a" style="left:494px;top:648px;width:1420px;height:350px;background:#2a2a2a;"></div>
<span class="t" style="top:652.15px;line-height:16px;font-size:12px;color:#b4b4b4;left:685px;letter-spacing:-0.02px;">Composition 1</span>
<svg class="a" style="left:952px;top:656px;" width="8" height="8" viewBox="0 0 8 8"><path d="M0.5 0.5 L7.5 7.5 M7.5 0.5 L0.5 7.5" stroke="#b0b0b0" stroke-width="1"/></svg>
<div class="a" style="left:968.6px;top:655px;width:1px;height:10px;background:#b0b0b0;"></div>
<div class="a" style="left:494px;top:670px;width:525px;height:328px;background:#444444;"></div>
<div class="a" style="left:497px;top:672px;width:313.5px;height:20.3px;background:#222;border-radius:10.2px;"></div>
<svg class="a" style="left:499.2px;top:675px;" width="14" height="15" viewBox="0 0 14 15"><circle cx="5.8" cy="5.8" r="4.7" fill="none" stroke="#e4e4e4" stroke-width="1"/><path d="M9.6 9.8 L12 12.4" stroke="#e4e4e4" stroke-width="1.5" stroke-linecap="round"/></svg>
<span class="t" style="top:675.15px;line-height:16px;font-size:12px;color:#8a8a8a;left:520px;letter-spacing:-0.24px;">Enter a layer name</span>
<div class="a" style="left:813.5px;top:673px;width:19px;height:18.3px;background:#222;border-radius:4px;box-shadow:inset 0 0 0 1px #4a4a4a;"></div>
<svg class="a" style="left:817.5px;top:676.5px;" width="11" height="11" viewBox="0 0 11 11"><path d="M5.5 0.8 V10.2 M0.8 5.5 H10.2" stroke="#f0f0f0" stroke-width="1.5"/><path d="M13.6 10.4 V13 H11 Z" fill="#59c58f"/></svg>
<div class="a" style="left:857.5px;top:673px;width:19.3px;height:18.3px;background:#222;border-radius:4px;box-shadow:inset 0 0 0 1px #4a4a4a;"></div>
<div class="a" style="left:879.5px;top:673px;width:19.3px;height:18.3px;background:#222;border-radius:4px;box-shadow:inset 0 0 0 1px #4a4a4a;"></div>
<div class="a" style="left:901.2px;top:673px;width:19.3px;height:18.3px;background:#222;border-radius:4px;box-shadow:inset 0 0 0 1px #4a4a4a;"></div>
<svg class="a" style="left:860px;top:675.5px;" width="15" height="14" viewBox="0 0 15 14"><circle cx="9.8" cy="5" r="3.8" fill="#e8e8e8"/><path d="M2.6 9 A6 6 0 0 0 7.8 11.6" fill="none" stroke="#9a9a9a" stroke-width="2"/><path d="M1 5.6 A8.6 8.6 0 0 0 6 12.8" fill="none" stroke="#6a6a6a" stroke-width="1.6"/></svg>
<svg class="a" style="left:882.2px;top:675.3px;" width="14" height="14" viewBox="0 0 14 14"><circle cx="3.1" cy="2.6" r="1.05" fill="#c4c4c4"/><circle cx="9.4" cy="2.9" r="1.05" fill="#c4c4c4"/><circle cx="2.7" cy="8.5" r="1.05" fill="#c4c4c4"/><path d="M8 5.6 C8.3 8 8.9 8.8 11.6 9.2 C8.9 9.6 8.3 10.4 8 12.8 C7.7 10.4 7.1 9.6 4.4 9.2 C7.1 8.8 7.7 8 8 5.6 Z" fill="#e8e8e8"/><path d="M13.4 11 V13.4 H11 Z" fill="#59c58f"/></svg>
<svg class="a" style="left:903.8px;top:675.5px;" width="14" height="14" viewBox="0 0 14 14"><path d="M0.6 2.4 H13 M0.6 7 H13 M0.6 11.6 H13" stroke="#e4e4e4" stroke-width="1" stroke-dasharray="2.4 1.4"/><circle cx="8.6" cy="2.4" r="1.6" fill="#222" stroke="#e4e4e4"/><circle cx="4.4" cy="7" r="1.6" fill="#222" stroke="#e4e4e4"/><circle cx="7.6" cy="11.6" r="1.6" fill="#222" stroke="#e4e4e4"/><path d="M14.4 11.4 V13.8 H12 Z" fill="#59c58f"/></svg>
<div class="a" style="left:923px;top:673px;width:93.5px;height:18.3px;background:#2c2c2c;border-radius:3px;"></div>
<span class="t" style="top:675.45px;line-height:16px;font-size:12px;color:#555;left:928px;">F</span>
<span class="t" style="top:675.15px;line-height:16px;font-size:12px;color:#e6e6e6;left:940px;letter-spacing:0.32px;">221</span>
<div class="a" style="left:494px;top:712px;width:511px;height:251px;background:#383838;"></div>
<div class="a" style="left:496px;top:699.75px;width:17.6px;height:18.2px;background:#2d2d2d;border-radius:3px;"></div>
<div class="a" style="left:515px;top:699.75px;width:18px;height:18.2px;background:#2d2d2d;border-radius:3px;"></div>
<div class="a" style="left:534.3px;top:699.75px;width:17.7px;height:18.2px;background:#2d2d2d;border-radius:3px;"></div>
<svg class="a" style="left:517px;top:704.5px;" width="14" height="9" viewBox="0 0 14 9"><path d="M0.5 4.5 C3 0.6 11 0.6 13.5 4.5 C11 8.4 3 8.4 0.5 4.5 Z" fill="none" stroke="#cfcfcf" stroke-width="1"/><circle cx="7" cy="4.5" r="2.1" fill="#cfcfcf"/></svg>
<div class="a" style="left:572.5px;top:701px;width:16.4px;height:16px;background:#ffe97c;border-radius:3px;"></div>
<svg class="a" style="left:593.2px;top:704.6px;" width="14" height="9" viewBox="0 0 14 9"><path d="M0.2 4.4 L3.4 0.5 H13 a0.7 0.7 0 0 1 0.7 0.7 V7.6 a0.7 0.7 0 0 1 -0.7 0.7 H3.4 Z" fill="#dcdcdc"/><circle cx="4.2" cy="4.4" r="1.25" fill="#262626"/></svg>
<svg class="a" style="left:667px;top:702.5px;" width="14" height="14" viewBox="0 0 14 14"><rect x="0.6" y="1" width="2" height="2" fill="#f0dc6a"/><rect x="0.6" y="6" width="2" height="2" fill="#f0dc6a"/><rect x="0.6" y="11" width="2" height="2" fill="#f0dc6a"/><rect x="5.8" y="1" width="2" height="2" fill="#f0dc6a"/><rect x="5.8" y="6" width="2" height="2" fill="#f0dc6a"/><rect x="5.8" y="11" width="2" height="2" fill="#f0dc6a"/><rect x="11.0" y="1" width="2" height="2" fill="#f0dc6a"/><rect x="11.0" y="6" width="2" height="2" fill="#f0dc6a"/><rect x="11.0" y="11" width="2" height="2" fill="#f0dc6a"/></svg>
<span class="t" style="top:701.95px;line-height:16px;font-size:12px;color:#9a9a9a;left:686px;letter-spacing:0.05px;">CircleOnGrid</span>
<div class="a" style="left:965.2px;top:701.2px;width:20.5px;height:16px;background:#2c2c2c;border-radius:4px;"></div>
<div class="a" style="left:975.1px;top:701.2px;width:0.8px;height:16px;background:#3a3a3a;"></div>
<svg class="a" style="left:965.4px;top:702.7px;" width="20" height="12" viewBox="0 0 20 12"><path d="M1.8 6 L4.4 3 H7.8 V9 H4.4 Z" fill="#7a7a7a"/><path d="M12.4 3 H15.8 L18.4 6 L15.8 9 H12.4 Z" fill="#c85cf2"/></svg>
<div class="a" style="left:991.5px;top:704.6px;width:9px;height:9px;border-radius:5px;border:1.2px solid #8a8a8a;"></div>
<div class="a" style="left:496px;top:721.75px;width:17.6px;height:18.2px;background:#2d2d2d;border-radius:3px;"></div>
<div class="a" style="left:515px;top:721.75px;width:18px;height:18.2px;background:#2d2d2d;border-radius:3px;"></div>
<div class="a" style="left:534.3px;top:721.75px;width:17.7px;height:18.2px;background:#2d2d2d;border-radius:3px;"></div>
<div class="a" style="left:572.5px;top:723px;width:16.4px;height:16px;background:#ffe97c;border-radius:3px;"></div>
<svg class="a" style="left:593.2px;top:726.6px;" width="14" height="9" viewBox="0 0 14 9"><path d="M0.2 4.4 L3.4 0.5 H13 a0.7 0.7 0 0 1 0.7 0.7 V7.6 a0.7 0.7 0 0 1 -0.7 0.7 H3.4 Z" fill="#dcdcdc"/><circle cx="4.2" cy="4.4" r="1.25" fill="#262626"/></svg>
<svg class="a" style="left:667px;top:724.5px;" width="14" height="14" viewBox="0 0 14 14"><path d="M3.4 1.4 H10 M3.4 12.2 H10 M1.2 3.8 V9.8 M12.2 3.8 V9.8" fill="none" stroke="#f0dc6a" stroke-width="1.1" stroke-dasharray="2.6 1.2"/><rect x="0.3" y="0.5" width="1.8" height="1.8" fill="#e8e8e8"/><rect x="0.3" y="11.3" width="1.8" height="1.8" fill="#e8e8e8"/><rect x="11.3" y="0.5" width="1.8" height="1.8" fill="#e8e8e8"/><rect x="11.3" y="11.3" width="1.8" height="1.8" fill="#e8e8e8"/></svg>
<span class="t" style="top:723.95px;line-height:16px;font-size:12px;color:#9a9a9a;left:686px;letter-spacing:-0.36px;">GridSE</span>
<div class="a" style="left:965.2px;top:723.2px;width:20.5px;height:16px;background:#2c2c2c;border-radius:4px;"></div>
<div class="a" style="left:975.1px;top:723.2px;width:0.8px;height:16px;background:#3a3a3a;"></div>
<svg class="a" style="left:965.4px;top:724.7px;" width="20" height="12" viewBox="0 0 20 12"><path d="M1.8 6 L4.4 3 H7.8 V9 H4.4 Z" fill="#7a7a7a"/><path d="M12.4 3 H15.8 L18.4 6 L15.8 9 H12.4 Z" fill="#c85cf2"/></svg>
<div class="a" style="left:991.5px;top:726.6px;width:9px;height:9px;border-radius:5px;border:1.2px solid #8a8a8a;"></div>
<div class="a" style="left:496px;top:743.75px;width:17.6px;height:18.2px;background:#2d2d2d;border-radius:3px;"></div>
<div class="a" style="left:515px;top:743.75px;width:18px;height:18.2px;background:#2d2d2d;border-radius:3px;"></div>
<div class="a" style="left:534.3px;top:743.75px;width:17.7px;height:18.2px;background:#2d2d2d;border-radius:3px;"></div>
<svg class="a" style="left:517px;top:748.5px;" width="14" height="9" viewBox="0 0 14 9"><path d="M0.5 4.5 C3 0.6 11 0.6 13.5 4.5 C11 8.4 3 8.4 0.5 4.5 Z" fill="none" stroke="#cfcfcf" stroke-width="1"/><circle cx="7" cy="4.5" r="2.1" fill="#cfcfcf"/></svg>
<div class="a" style="left:572.5px;top:745px;width:16.4px;height:16px;background:#c4c4c4;border-radius:3px;"></div>
<svg class="a" style="left:593.2px;top:748.6px;" width="14" height="9" viewBox="0 0 14 9"><path d="M0.2 4.4 L3.4 0.5 H13 a0.7 0.7 0 0 1 0.7 0.7 V7.6 a0.7 0.7 0 0 1 -0.7 0.7 H3.4 Z" fill="#dcdcdc"/><circle cx="4.2" cy="4.4" r="1.25" fill="#262626"/></svg>
<div class="a" style="left:610.5px;top:743.75px;width:31px;height:18.2px;background:#343434;border-radius:3px;"></div>
<svg class="a" style="left:615px;top:751px;" width="7.5" height="5" viewBox="0 0 7.5 5"><path d="M0.5 0.5 L3.75 4.5 L7.0 0.5" fill="none" stroke="#a0a0a0" stroke-width="1.1"/></svg>
<svg class="a" style="left:647.5px;top:747px;" width="14.5" height="12" viewBox="0 0 14.5 12"><path d="M0.5 11.5 V1.5 a1 1 0 0 1 1 -1 H5 L6.5 2.5 H12.5 a1 1 0 0 1 1 1 V11.5 Z" fill="#d4d4d4"/></svg>
<span class="t" style="top:745.95px;line-height:16px;font-size:12px;color:#e6e6e6;left:667px;letter-spacing:0.15px;">Vignette</span>
<div class="a" style="left:991.5px;top:748.6px;width:9px;height:9px;border-radius:5px;border:1.2px solid #8a8a8a;"></div>
<div class="a" style="left:496px;top:765.75px;width:17.6px;height:18.2px;background:#2d2d2d;border-radius:3px;"></div>
<div class="a" style="left:515px;top:765.75px;width:18px;height:18.2px;background:#2d2d2d;border-radius:3px;"></div>
<svg class="a" style="left:518px;top:768.9px;" width="12" height="12" viewBox="0 0 12 12"><path d="M10.6 5 A4.9 4.9 0 1 1 8 1.7" fill="none" stroke="#e4e4e4" stroke-width="1.1"/><path d="M3.6 5.6 L5.8 7.9 L10.9 1.7" fill="none" stroke="#e4e4e4" stroke-width="1.3"/></svg>
<div class="a" style="left:572.5px;top:767px;width:16.4px;height:16px;background:#ff8ab4;border-radius:3px;"></div>
<svg class="a" style="left:593.2px;top:770.6px;" width="14" height="9" viewBox="0 0 14 9"><path d="M0.2 4.4 L3.4 0.5 H13 a0.7 0.7 0 0 1 0.7 0.7 V7.6 a0.7 0.7 0 0 1 -0.7 0.7 H3.4 Z" fill="#dcdcdc"/><circle cx="4.2" cy="4.4" r="1.25" fill="#262626"/></svg>
<svg class="a" style="left:667px;top:768.5px;" width="14" height="14" viewBox="0 0 14 14"><defs><linearGradient id="lg1" x1="0" y1="0" x2="1" y2="1"><stop offset="0" stop-color="#f0a0a8"/><stop offset="1" stop-color="#5a4a4c"/></linearGradient></defs><rect x="0" y="2.6" width="11.4" height="11.4" fill="url(#lg1)"/><circle cx="11.6" cy="3" r="3.6" fill="#e8e8e8"/></svg>
<span class="t" style="top:767.95px;line-height:16px;font-size:12px;color:#e6e6e6;left:686px;letter-spacing:-0.21px;">Gradient Shader [Background Shape]</span>
<div class="a" style="left:965.2px;top:767.2px;width:20.5px;height:16px;background:#2c2c2c;border-radius:4px;"></div>
<div class="a" style="left:975.1px;top:767.2px;width:0.8px;height:16px;background:#3a3a3a;"></div>
<svg class="a" style="left:965.4px;top:768.7px;" width="20" height="12" viewBox="0 0 20 12"><path d="M1.8 6 L4.4 3 H7.8 V9 H4.4 Z" fill="#7a7a7a"/><path d="M12.4 3 H15.8 L18.4 6 L15.8 9 H12.4 Z" fill="#c85cf2"/></svg>
<div class="a" style="left:991.5px;top:770.6px;width:9px;height:9px;border-radius:5px;border:1.2px solid #8a8a8a;"></div>
<div class="a" style="left:496px;top:787.75px;width:17.6px;height:18.2px;background:#2d2d2d;border-radius:3px;"></div>
<div class="a" style="left:515px;top:787.75px;width:18px;height:18.2px;background:#2d2d2d;border-radius:3px;"></div>
<div class="a" style="left:534.3px;top:787.75px;width:17.7px;height:18.2px;background:#2d2d2d;border-radius:3px;"></div>
<svg class="a" style="left:517px;top:792.5px;" width="14" height="9" viewBox="0 0 14 9"><path d="M0.5 4.5 C3 0.6 11 0.6 13.5 4.5 C11 8.4 3 8.4 0.5 4.5 Z" fill="none" stroke="#cfcfcf" stroke-width="1"/><circle cx="7" cy="4.5" r="2.1" fill="#cfcfcf"/></svg>
<div class="a" style="left:572.5px;top:789px;width:16.4px;height:16px;background:#ffe97c;border-radius:3px;"></div>
<svg class="a" style="left:593.2px;top:792.6px;" width="14" height="9" viewBox="0 0 14 9"><path d="M0.2 4.4 L3.4 0.5 H13 a0.7 0.7 0 0 1 0.7 0.7 V7.6 a0.7 0.7 0 0 1 -0.7 0.7 H3.4 Z" fill="#dcdcdc"/><circle cx="4.2" cy="4.4" r="1.25" fill="#262626"/></svg>
<svg class="a" style="left:667px;top:790.5px;" width="14" height="14" viewBox="0 0 14 14"><rect x="0.6" y="0.6" width="12.8" height="12.8" fill="none" stroke="#f0dc6a" stroke-width="1.1"/><rect x="2.8" y="2.8" width="8.4" height="8.4" fill="#d0d0d0"/></svg>
<span class="t" style="top:789.95px;line-height:16px;font-size:12px;color:#e6e6e6;left:686px;letter-spacing:-0.29px;">Background Shape</span>
<div class="a" style="left:965.2px;top:789.2px;width:20.5px;height:16px;background:#2c2c2c;border-radius:4px;"></div>
<div class="a" style="left:975.1px;top:789.2px;width:0.8px;height:16px;background:#3a3a3a;"></div>
<svg class="a" style="left:965.4px;top:790.7px;" width="20" height="12" viewBox="0 0 20 12"><path d="M1.8 6 L4.4 3 H7.8 V9 H4.4 Z" fill="#dcc66c"/><path d="M12.4 3 H15.8 L18.4 6 L15.8 9 H12.4 Z" fill="#8a8a8a"/></svg>
<div class="a" style="left:991.5px;top:792.6px;width:9px;height:9px;border-radius:5px;border:1.2px solid #8a8a8a;"></div>
<div class="a" style="left:496px;top:809.75px;width:17.6px;height:18.2px;background:#2d2d2d;border-radius:3px;"></div>
<div class="a" style="left:515px;top:809.75px;width:18px;height:18.2px;background:#2d2d2d;border-radius:3px;"></div>
<div class="a" style="left:534.3px;top:809.75px;width:17.7px;height:18.2px;background:#2d2d2d;border-radius:3px;"></div>
<svg class="a" style="left:517px;top:814.5px;" width="14" height="9" viewBox="0 0 14 9"><path d="M0.5 4.5 C3 0.6 11 0.6 13.5 4.5 C11 8.4 3 8.4 0.5 4.5 Z" fill="none" stroke="#cfcfcf" stroke-width="1"/><circle cx="7" cy="4.5" r="2.1" fill="#cfcfcf"/></svg>
<div class="a" style="left:572.5px;top:811px;width:16.4px;height:16px;background:#c4c4c4;border-radius:3px;"></div>
<svg class="a" style="left:593.2px;top:814.6px;" width="14" height="9" viewBox="0 0 14 9"><path d="M0.2 4.4 L3.4 0.5 H13 a0.7 0.7 0 0 1 0.7 0.7 V7.6 a0.7 0.7 0 0 1 -0.7 0.7 H3.4 Z" fill="#dcdcdc"/><circle cx="4.2" cy="4.4" r="1.25" fill="#262626"/></svg>
<div class="a" style="left:610.5px;top:809.75px;width:31px;height:18.2px;background:#343434;border-radius:3px;"></div>
<svg class="a" style="left:615px;top:817px;" width="7.5" height="5" viewBox="0 0 7.5 5"><path d="M0.5 0.5 L3.75 4.5 L7.0 0.5" fill="none" stroke="#a0a0a0" stroke-width="1.1"/></svg>
<div class="a" style="left:631px;top:816.9px;width:5.2px;height:5.2px;background:#f0f0f0;border-radius:3px;"></div>
<svg class="a" style="left:647.5px;top:813px;" width="14.5" height="12" viewBox="0 0 14.5 12"><path d="M0.5 11.5 V1.5 a1 1 0 0 1 1 -1 H5 L6.5 2.5 H12.5 a1 1 0 0 1 1 1 V11.5 Z" fill="#d4d4d4"/></svg>
<span class="t" style="top:811.95px;line-height:16px;font-size:12px;color:#e6e6e6;left:667px;letter-spacing:-0.17px;">Graph</span>
<div class="a" style="left:991.5px;top:814.6px;width:9px;height:9px;border-radius:5px;border:1.2px solid #8a8a8a;"></div>
<div class="a" style="left:496px;top:853.75px;width:17.6px;height:18.2px;background:#2d2d2d;border-radius:3px;"></div>
<div class="a" style="left:515px;top:853.75px;width:18px;height:18.2px;background:#2d2d2d;border-radius:3px;"></div>
<svg class="a" style="left:518px;top:856.9px;" width="12" height="12" viewBox="0 0 12 12"><path d="M10.6 5 A4.9 4.9 0 1 1 8 1.7" fill="none" stroke="#e4e4e4" stroke-width="1.1"/><path d="M3.6 5.6 L5.8 7.9 L10.9 1.7" fill="none" stroke="#e4e4e4" stroke-width="1.3"/></svg>
<div class="a" style="left:572.5px;top:855px;width:16.4px;height:16px;background:#f5a56e;border-radius:3px;"></div>
<svg class="a" style="left:593.2px;top:858.6px;" width="14" height="9" viewBox="0 0 14 9"><path d="M0.2 4.4 L3.4 0.5 H13 a0.7 0.7 0 0 1 0.7 0.7 V7.6 a0.7 0.7 0 0 1 -0.7 0.7 H3.4 Z" fill="#dcdcdc"/><circle cx="4.2" cy="4.4" r="1.25" fill="#262626"/></svg>
<svg class="a" style="left:667px;top:856.5px;" width="14" height="14" viewBox="0 0 14 14"><path d="M0 0.6 H4.6 M0 2.6 H3.2" stroke="#aad0f2" stroke-width="1"/><rect x="4" y="2.4" width="10" height="10.6" fill="#a9d2f5"/><path d="M7.6 5 V9.6 a1.2 1.2 0 0 1 -2.4 0 M12.4 5.4 H10.6 a1 1 0 0 0 0 2.4 H11.4 a1 1 0 0 1 0 2.4 H9.6" fill="none" stroke="#2a4a6a" stroke-width="1"/></svg>
<span class="t" style="top:855.95px;line-height:16px;font-size:12px;color:#e6e6e6;left:686px;letter-spacing:-0.16px;">Jsmath [Length]</span>
<div class="a" style="left:965.2px;top:855.2px;width:20.5px;height:16px;background:#2c2c2c;border-radius:4px;"></div>
<div class="a" style="left:975.1px;top:855.2px;width:0.8px;height:16px;background:#3a3a3a;"></div>
<svg class="a" style="left:965.4px;top:856.7px;" width="20" height="12" viewBox="0 0 20 12"><path d="M1.8 6 L4.4 3 H7.8 V9 H4.4 Z" fill="#dcc66c"/><path d="M12.4 3 H15.8 L18.4 6 L15.8 9 H12.4 Z" fill="#c85cf2"/></svg>
<div class="a" style="left:991.5px;top:858.6px;width:9px;height:9px;border-radius:5px;border:1.2px solid #8a8a8a;"></div>
<div class="a" style="left:496px;top:875.75px;width:17.6px;height:18.2px;background:#2d2d2d;border-radius:3px;"></div>
<div class="a" style="left:515px;top:875.75px;width:18px;height:18.2px;background:#2d2d2d;border-radius:3px;"></div>
<div class="a" style="left:534.3px;top:875.75px;width:17.7px;height:18.2px;background:#2d2d2d;border-radius:3px;"></div>
<svg class="a" style="left:517px;top:880.5px;" width="14" height="9" viewBox="0 0 14 9"><path d="M0.5 4.5 C3 0.6 11 0.6 13.5 4.5 C11 8.4 3 8.4 0.5 4.5 Z" fill="none" stroke="#cfcfcf" stroke-width="1"/><circle cx="7" cy="4.5" r="2.1" fill="#cfcfcf"/></svg>
<div class="a" style="left:572.5px;top:877px;width:16.4px;height:16px;background:#ffe97c;border-radius:3px;"></div>
<svg class="a" style="left:593.2px;top:880.6px;" width="14" height="9" viewBox="0 0 14 9"><path d="M0.2 4.4 L3.4 0.5 H13 a0.7 0.7 0 0 1 0.7 0.7 V7.6 a0.7 0.7 0 0 1 -0.7 0.7 H3.4 Z" fill="#dcdcdc"/><circle cx="4.2" cy="4.4" r="1.25" fill="#262626"/></svg>
<svg class="a" style="left:667px;top:878.5px;" width="14" height="14" viewBox="0 0 14 14"><rect x="0.6" y="1" width="2" height="2" fill="#f0dc6a"/><rect x="0.6" y="6" width="2" height="2" fill="#f0dc6a"/><rect x="0.6" y="11" width="2" height="2" fill="#f0dc6a"/><rect x="5.8" y="1" width="2" height="2" fill="#f0dc6a"/><rect x="5.8" y="6" width="2" height="2" fill="#f0dc6a"/><rect x="5.8" y="11" width="2" height="2" fill="#f0dc6a"/><rect x="11.0" y="1" width="2" height="2" fill="#f0dc6a"/><rect x="11.0" y="6" width="2" height="2" fill="#f0dc6a"/><rect x="11.0" y="11" width="2" height="2" fill="#f0dc6a"/></svg>
<span class="t" style="top:877.95px;line-height:16px;font-size:12px;color:#e6e6e6;left:686px;letter-spacing:0.08px;">Duplicator - Horizontal</span>
<div class="a" style="left:965.2px;top:877.2px;width:20.5px;height:16px;background:#2c2c2c;border-radius:4px;"></div>
<div class="a" style="left:975.1px;top:877.2px;width:0.8px;height:16px;background:#3a3a3a;"></div>
<svg class="a" style="left:965.4px;top:878.7px;" width="20" height="12" viewBox="0 0 20 12"><path d="M1.8 6 L4.4 3 H7.8 V9 H4.4 Z" fill="#dcc66c"/><path d="M12.4 3 H15.8 L18.4 6 L15.8 9 H12.4 Z" fill="#c85cf2"/></svg>
<div class="a" style="left:991.5px;top:880.6px;width:9px;height:9px;border-radius:5px;border:1.2px solid #8a8a8a;"></div>
<div class="a" style="left:496px;top:897.75px;width:17.6px;height:18.2px;background:#2d2d2d;border-radius:3px;"></div>
<div class="a" style="left:515px;top:897.75px;width:18px;height:18.2px;background:#2d2d2d;border-radius:3px;"></div>
<div class="a" style="left:534.3px;top:897.75px;width:17.7px;height:18.2px;background:#2d2d2d;border-radius:3px;"></div>
<svg class="a" style="left:517px;top:902.5px;" width="14" height="9" viewBox="0 0 14 9"><path d="M0.5 4.5 C3 0.6 11 0.6 13.5 4.5 C11 8.4 3 8.4 0.5 4.5 Z" fill="none" stroke="#cfcfcf" stroke-width="1"/><circle cx="7" cy="4.5" r="2.1" fill="#cfcfcf"/></svg>
<div class="a" style="left:572.5px;top:899px;width:16.4px;height:16px;background:#ffe97c;border-radius:3px;"></div>
<svg class="a" style="left:593.2px;top:902.6px;" width="14" height="9" viewBox="0 0 14 9"><path d="M0.2 4.4 L3.4 0.5 H13 a0.7 0.7 0 0 1 0.7 0.7 V7.6 a0.7 0.7 0 0 1 -0.7 0.7 H3.4 Z" fill="#dcdcdc"/><circle cx="4.2" cy="4.4" r="1.25" fill="#262626"/></svg>
<svg class="a" style="left:667px;top:900.5px;" width="14" height="14" viewBox="0 0 14 14"><rect x="0.6" y="1" width="2" height="2" fill="#f0dc6a"/><rect x="0.6" y="6" width="2" height="2" fill="#f0dc6a"/><rect x="0.6" y="11" width="2" height="2" fill="#f0dc6a"/><rect x="5.8" y="1" width="2" height="2" fill="#f0dc6a"/><rect x="5.8" y="6" width="2" height="2" fill="#f0dc6a"/><rect x="5.8" y="11" width="2" height="2" fill="#f0dc6a"/><rect x="11.0" y="1" width="2" height="2" fill="#f0dc6a"/><rect x="11.0" y="6" width="2" height="2" fill="#f0dc6a"/><rect x="11.0" y="11" width="2" height="2" fill="#f0dc6a"/></svg>
<span class="t" style="top:899.95px;line-height:16px;font-size:12px;color:#e6e6e6;left:686px;letter-spacing:0.07px;">Duplicator - Vertical</span>
<div class="a" style="left:965.2px;top:899.2px;width:20.5px;height:16px;background:#2c2c2c;border-radius:4px;"></div>
<div class="a" style="left:975.1px;top:899.2px;width:0.8px;height:16px;background:#3a3a3a;"></div>
<svg class="a" style="left:965.4px;top:900.7px;" width="20" height="12" viewBox="0 0 20 12"><path d="M1.8 6 L4.4 3 H7.8 V9 H4.4 Z" fill="#dcc66c"/><path d="M12.4 3 H15.8 L18.4 6 L15.8 9 H12.4 Z" fill="#c85cf2"/></svg>
<div class="a" style="left:991.5px;top:902.6px;width:9px;height:9px;border-radius:5px;border:1.2px solid #8a8a8a;"></div>
<div class="a" style="left:496px;top:919.6px;width:507px;height:18.6px;background:#4b5038;border-radius:3px;"></div>
<div class="a" style="left:496px;top:919.75px;width:17.6px;height:18.2px;background:#2d2d2d;border-radius:3px;"></div>
<div class="a" style="left:515px;top:919.75px;width:18px;height:18.2px;background:#2d2d2d;border-radius:3px;"></div>
<svg class="a" style="left:518px;top:922.9px;" width="12" height="12" viewBox="0 0 12 12"><path d="M10.6 5 A4.9 4.9 0 1 1 8 1.7" fill="none" stroke="#e4e4e4" stroke-width="1.1"/><path d="M3.6 5.6 L5.8 7.9 L10.9 1.7" fill="none" stroke="#e4e4e4" stroke-width="1.3"/></svg>
<div class="a" style="left:572.5px;top:921px;width:16.4px;height:16px;background:#c4f07e;border-radius:3px;"></div>
<svg class="a" style="left:593.2px;top:924.6px;" width="14" height="9" viewBox="0 0 14 9"><path d="M0.2 4.4 L3.4 0.5 H13 a0.7 0.7 0 0 1 0.7 0.7 V7.6 a0.7 0.7 0 0 1 -0.7 0.7 H3.4 Z" fill="#dcdcdc"/><circle cx="4.2" cy="4.4" r="1.25" fill="#262626"/></svg>
<svg class="a" style="left:667px;top:922.5px;" width="14" height="14" viewBox="0 0 14 14"><path d="M0 11 H2.4 V3.6 H5.2 V11 H7.8 V3.6 H10.6 V11 H13.6" fill="none" stroke="#7bd88f" stroke-width="1.2"/></svg>
<span class="t" style="top:921.95px;line-height:16px;font-size:12px;color:#f0f0f0;left:686px;letter-spacing:0.22px;">Modulate [Width]</span>
<div class="a" style="left:965.2px;top:921.2px;width:20.5px;height:16px;background:#2c2c2c;border-radius:4px;"></div>
<div class="a" style="left:975.1px;top:921.2px;width:0.8px;height:16px;background:#3a3a3a;"></div>
<svg class="a" style="left:965.4px;top:922.7px;" width="20" height="12" viewBox="0 0 20 12"><path d="M1.8 6 L4.4 3 H7.8 V9 H4.4 Z" fill="#7a7a7a"/><path d="M12.4 3 H15.8 L18.4 6 L15.8 9 H12.4 Z" fill="#c85cf2"/></svg>
<div class="a" style="left:991.5px;top:924.6px;width:9px;height:9px;border-radius:5px;border:1.2px solid #6a6a6a;"></div>
<div class="a" style="left:496px;top:941.75px;width:17.6px;height:18.2px;background:#2d2d2d;border-radius:3px;"></div>
<div class="a" style="left:515px;top:941.75px;width:18px;height:18.2px;background:#2d2d2d;border-radius:3px;"></div>
<div class="a" style="left:534.3px;top:941.75px;width:17.7px;height:18.2px;background:#2d2d2d;border-radius:3px;"></div>
<div class="a" style="left:572.5px;top:943px;width:16.4px;height:16px;background:#ffe97c;border-radius:3px;"></div>
<svg class="a" style="left:593.2px;top:946.6px;" width="14" height="9" viewBox="0 0 14 9"><path d="M0.2 4.4 L3.4 0.5 H13 a0.7 0.7 0 0 1 0.7 0.7 V7.6 a0.7 0.7 0 0 1 -0.7 0.7 H3.4 Z" fill="#dcdcdc"/><circle cx="4.2" cy="4.4" r="1.25" fill="#262626"/></svg>
<svg class="a" style="left:667px;top:944.5px;" width="14" height="14" viewBox="0 0 14 14"><rect x="0" y="6.3" width="1.8" height="1.8" fill="#f0dc6a"/><rect x="3.4" y="6.5" width="7" height="1.4" fill="#e0e0e0"/><rect x="12" y="6.3" width="1.8" height="1.8" fill="#f0dc6a"/></svg>
<span class="t" style="top:943.95px;line-height:16px;font-size:12px;color:#9a9a9a;left:686px;letter-spacing:-0.34px;">Basic Line</span>
<div class="a" style="left:965.2px;top:943.2px;width:20.5px;height:16px;background:#2c2c2c;border-radius:4px;"></div>
<div class="a" style="left:975.1px;top:943.2px;width:0.8px;height:16px;background:#3a3a3a;"></div>
<div class="a" style="left:965.2px;top:943.2px;width:10.3px;height:16px;border-radius:3px;border:1px solid #8a7a3a;"></div>
<svg class="a" style="left:965.4px;top:944.7px;" width="20" height="12" viewBox="0 0 20 12"><path d="M1.8 6 L4.4 3 H7.8 V9 H4.4 Z" fill="#dcc66c"/><path d="M12.4 3 H15.8 L18.4 6 L15.8 9 H12.4 Z" fill="#c85cf2"/></svg>
<div class="a" style="left:991.5px;top:946.6px;width:9px;height:9px;border-radius:5px;border:1.2px solid #8a8a8a;"></div>
<svg class="a" style="left:632px;top:829px;" width="12" height="13" viewBox="0 0 12 13"><path d="M1.5 0 V11.5 H11" fill="none" stroke="#bdbdbd" stroke-width="1" stroke-dasharray="1 1"/></svg>
<span class="t" style="top:833.95px;line-height:16px;font-size:12px;color:#e6e6e6;left:647px;letter-spacing:-0.2px;">Position.Y</span>
<div class="a" style="left:907px;top:833.2px;width:84px;height:15.6px;background:#262626;border-radius:3px;"></div>
<div class="a" style="left:991px;top:833.2px;width:10px;height:15.6px;background:#333;border-radius:0 3px 3px 0;"></div>
<span class="t" style="top:833.55px;line-height:16px;font-size:12px;color:#666;left:911px;">Y</span>
<span class="t" style="top:833.55px;line-height:16px;font-size:12px;color:#e6e6e6;left:924px;letter-spacing:-0.06px;">8.8</span>
<svg class="a" style="left:978.6px;top:836.8px;" width="9" height="9" viewBox="0 0 9 9"><path d="M4.5 0.4 L8.6 4.5 L4.5 8.6 L0.4 4.5 Z" fill="#dcdcdc"/></svg>
<svg class="a" style="left:992.6px;top:837.3px;" width="7" height="8" viewBox="0 0 7 8"><path d="M0.4 0.8 H3 L6.2 3.8 L3 6.8 H0.4 Z" fill="#8a8a8a"/></svg>
<div class="a" style="left:494px;top:693px;width:525px;height:19px;background:#444444;"></div>
<svg class="a" style="left:500.5px;top:697.5px;" width="9" height="12" viewBox="0 0 9 12"><path d="M2.2 5.4 V3.4 a2.3 2.3 0 0 1 4.6 0 V5.4" fill="none" stroke="#d4d4d4" stroke-width="1.3"/><rect x="0.4" y="5.2" width="8.2" height="6.4" rx="1" fill="#d4d4d4"/><rect x="3.8" y="7" width="1.4" height="2.8" fill="#444"/></svg>
<svg class="a" style="left:517px;top:699.3px;" width="14" height="9" viewBox="0 0 14 9"><path d="M0.5 4.5 C3 0.6 11 0.6 13.5 4.5 C11 8.4 3 8.4 0.5 4.5 Z" fill="none" stroke="#d4d4d4" stroke-width="1"/><circle cx="7" cy="4.5" r="2.1" fill="#d4d4d4"/></svg>
<svg class="a" style="left:536px;top:697.2px;" width="14" height="14" viewBox="0 0 14 14"><path d="M7 0.8 L12.8 3.6 V10.2 L7 13.2 L1.2 10.2 V3.6 Z M1.4 3.7 L7 6.6 L12.6 3.7 M7 6.6 V13" fill="none" stroke="#d4d4d4" stroke-width="1"/></svg>
<svg class="a" style="left:555px;top:697.8px;" width="15" height="12" viewBox="0 0 15 12"><path d="M0.6 4 H3 L6.4 1 V11 L3 8 H0.6 Z" fill="#d4d4d4"/><path d="M8.2 3.8 A3.2 3.2 0 0 1 8.2 8.2 M10 2.2 A5.6 5.6 0 0 1 10 9.8 M11.8 0.8 A7.8 7.8 0 0 1 11.8 11.2" fill="none" stroke="#d4d4d4" stroke-width="1.1"/></svg>
<svg class="a" style="left:575px;top:697.8px;" width="12" height="12" viewBox="0 0 12 12"><path d="M1 11 L1.6 9 L6.6 4 L8 5.4 L3 10.4 Z" fill="none" stroke="#d4d4d4" stroke-width="1"/><path d="M6 2.8 L9.2 6 M7.2 4.8 L9.6 2.4" stroke="#d4d4d4" stroke-width="2.6" stroke-linecap="round"/></svg>
<svg class="a" style="left:593.5px;top:699.3px;" width="12" height="9" viewBox="0 0 12 9"><path d="M0.2 4.4 L3.4 0.5 H13 a0.7 0.7 0 0 1 0.7 0.7 V7.6 a0.7 0.7 0 0 1 -0.7 0.7 H3.4 Z" fill="#d4d4d4"/><circle cx="4.2" cy="4.4" r="1.25" fill="#262626"/></svg>
<span class="t" style="top:696.15px;line-height:16px;font-size:12px;color:#e6e6e6;left:649px;letter-spacing:-0.13px;">Name</span>
<div class="a" style="left:648px;top:915.6px;width:187px;height:28px;border:3px solid #b5e61d;"></div>
<div class="a" style="left:1007.2px;top:741px;width:9.8px;height:219px;background:#505050;border-radius:5px;"></div>
<div class="a" style="left:495px;top:964.3px;width:508.6px;height:9.5px;background:#545454;border-radius:5px;"></div>
<div class="a" style="left:497.1px;top:977.6px;width:19.6px;height:18.8px;background:#2a2a2a;border-radius:4px;box-shadow:inset 0 0 0 1px #4a4a4a;"></div>
<svg class="a" style="left:499.6px;top:982.4px;" width="15" height="9" viewBox="0 0 14 9"><path d="M0.2 4.4 L3.4 0.5 H13 a0.7 0.7 0 0 1 0.7 0.7 V7.6 a0.7 0.7 0 0 1 -0.7 0.7 H3.4 Z" fill="#dcdcdc"/><circle cx="4.2" cy="4.4" r="1.25" fill="#262626"/></svg>
<span class="t" style="top:980.15px;line-height:16px;font-size:12px;color:#e6e6e6;left:520.4px;letter-spacing:-0.24px;">1 selected</span>
<div class="a" style="left:810.2px;top:977.4px;width:19.2px;height:19px;background:#2a2a2a;border-radius:4px;box-shadow:inset 0 0 0 1px #4a4a4a;"></div>
<svg class="a" style="left:814.2px;top:981.2px;" width="12" height="12" viewBox="0 0 12 12"><rect x="0.7" y="0.7" width="10.4" height="10.4" fill="none" stroke="#d4d4d4" stroke-width="1.2"/><circle cx="5.9" cy="5.9" r="1.9" fill="#e4e4e4"/></svg>
<div class="a" style="left:833.6px;top:978.3px;width:182.4px;height:18px;background:#5c5c5c;border-radius:4px;"></div>
<div class="a" style="left:834.6px;top:979px;width:85.6px;height:16.6px;background:#262626;border-radius:3px;"></div>
<svg class="a" style="left:840px;top:982px;" width="12" height="11" viewBox="0 0 12 11"><path d="M1.4 1.2 H11.6 M3 5.5 H9.6 M0.4 9.8 H10.4" stroke="#2ecc71" stroke-width="2"/></svg>
<span class="t" style="top:980.15px;line-height:16px;font-size:12px;color:#f0f0f0;left:856px;letter-spacing:0.01px;">Time Editor</span>
<svg class="a" style="left:928.5px;top:981.5px;" width="12" height="12" viewBox="0 0 12 12"><path d="M1.6 0.6 V10.6 H11.6 M0 9 H3 M3.2 12 V8.8" fill="none" stroke="#c8c8c8" stroke-width="1"/><path d="M1.8 10.4 L11 3.2" stroke="#c8c8c8" stroke-width="1"/></svg>
<span class="t" style="top:980.15px;line-height:16px;font-size:12px;color:#f0f0f0;left:945px;letter-spacing:-0.05px;">Graph Editor</span>
<span class="t" style="top:652.15px;line-height:16px;font-size:12px;color:#b4b4b4;left:1123.3px;letter-spacing:-0.05px;">background grid animation</span>
<svg class="a" style="left:1422px;top:656px;" width="8" height="8" viewBox="0 0 8 8"><path d="M0.5 0.5 L7.5 7.5 M7.5 0.5 L0.5 7.5" stroke="#b0b0b0" stroke-width="1"/></svg>
<div class="a" style="left:1439.3px;top:650px;width:469.7px;height:20.7px;background:#444444;border-radius:4px 4px 0 0;"></div>
<span class="t" style="top:652.15px;line-height:16px;font-size:12px;color:#e6e6e6;left:1588.7px;letter-spacing:-0.08px;">background grid animation 1</span>
<svg class="a" style="left:1892.3px;top:656px;" width="8" height="8" viewBox="0 0 8 8"><path d="M0.5 0.5 L7.5 7.5 M7.5 0.5 L0.5 7.5" stroke="#c0c0c0" stroke-width="1"/></svg>
<div class="a" style="left:1023.2px;top:670px;width:889.8px;height:306px;background:#222;"></div>
<div class="a" style="left:1021.4px;top:827.2px;width:1.3px;height:1.3px;background:#b0b0b0;"></div>
<div class="a" style="left:1021.4px;top:830.2px;width:1.3px;height:1.3px;background:#b0b0b0;"></div>
<div class="a" style="left:1021.4px;top:833.2px;width:1.3px;height:1.3px;background:#b0b0b0;"></div>
<div class="a" style="left:1021.4px;top:836.2px;width:1.3px;height:1.3px;background:#b0b0b0;"></div>
<div class="a" style="left:1021.4px;top:839.2px;width:1.3px;height:1.3px;background:#b0b0b0;"></div>
<div class="a" style="left:1021.4px;top:842.2px;width:1.3px;height:1.3px;background:#b0b0b0;"></div>
<svg class="a" style="left:1023.2px;top:670px;overflow:hidden;" width="889.8" height="24" viewBox="0 0 889.8 24"><path d="M10.6 16.4 V24 M21.06 20.4 V24 M31.52 20.4 V24 M41.98 20.4 V24 M52.44 20.4 V24 M62.9 16.4 V24 M73.36 20.4 V24 M83.82 20.4 V24 M94.28 20.4 V24 M104.74 20.4 V24 M115.19 16.4 V24 M125.65 20.4 V24 M136.11 20.4 V24 M146.57 20.4 V24 M157.03 20.4 V24 M167.49 16.4 V24 M177.95 20.4 V24 M188.41 20.4 V24 M198.87 20.4 V24 M209.33 20.4 V24 M219.79 16.4 V24 M230.25 20.4 V24 M240.71 20.4 V24 M251.17 20.4 V24 M261.63 20.4 V24 M272.09 16.4 V24 M282.55 20.4 V24 M293.01 20.4 V24 M303.47 20.4 V24 M313.93 20.4 V24 M324.38 16.4 V24 M334.84 20.4 V24 M345.3 20.4 V24 M355.76 20.4 V24 M366.22 20.4 V24 M376.68 16.4 V24 M387.14 20.4 V24 M397.6 20.4 V24 M408.06 20.4 V24 M418.52 20.4 V24 M428.98 16.4 V24 M439.44 20.4 V24 M449.9 20.4 V24 M460.36 20.4 V24 M470.82 20.4 V24 M481.28 16.4 V24 M491.74 20.4 V24 M502.2 20.4 V24 M512.66 20.4 V24 M523.12 20.4 V24 M533.58 16.4 V24 M544.03 20.4 V24 M554.49 20.4 V24 M564.95 20.4 V24 M575.41 20.4 V24 M585.87 16.4 V24 M596.33 20.4 V24 M606.79 20.4 V24 M617.25 20.4 V24 M627.71 20.4 V24 M638.17 16.4 V24 M648.63 20.4 V24 M659.09 20.4 V24 M669.55 20.4 V24 M680.01 20.4 V24 M690.47 16.4 V24 M700.93 20.4 V24 M711.39 20.4 V24 M721.85 20.4 V24 M732.31 20.4 V24 M742.76 16.4 V24 M753.22 20.4 V24 M763.68 20.4 V24 M774.14 20.4 V24 M784.6 20.4 V24 M795.06 16.4 V24 M805.52 20.4 V24 M815.98 20.4 V24 M826.44 20.4 V24 M836.9 20.4 V24 M847.36 16.4 V24 M857.82 20.4 V24 M868.28 20.4 V24 M878.74 20.4 V24" stroke="#b0b0b0" stroke-width="1" fill="none"/></svg>
<span class="t" style="top:671.15px;line-height:16px;font-size:12px;color:#e0e0e0;left:1028.85px;letter-spacing:0.61px;">0</span>
<span class="t" style="top:671.15px;line-height:16px;font-size:12px;color:#e0e0e0;left:1079.1px;letter-spacing:0.02px;">15</span>
<span class="t" style="top:671.15px;line-height:16px;font-size:12px;color:#e0e0e0;left:1131.39px;letter-spacing:0.02px;">30</span>
<span class="t" style="top:671.15px;line-height:16px;font-size:12px;color:#e0e0e0;left:1183.69px;letter-spacing:0.02px;">45</span>
<span class="t" style="top:671.15px;line-height:16px;font-size:12px;color:#e0e0e0;left:1235.99px;letter-spacing:0.02px;">60</span>
<span class="t" style="top:671.15px;line-height:16px;font-size:12px;color:#e0e0e0;left:1288.29px;letter-spacing:0.02px;">75</span>
<span class="t" style="top:671.15px;line-height:16px;font-size:12px;color:#e0e0e0;left:1340.59px;letter-spacing:0.02px;">90</span>
<span class="t" style="top:671.15px;line-height:16px;font-size:12px;color:#e0e0e0;left:1389.38px;letter-spacing:0.12px;">105</span>
<span class="t" style="top:671.15px;line-height:16px;font-size:12px;color:#e0e0e0;left:1441.68px;letter-spacing:0.12px;">120</span>
<span class="t" style="top:671.15px;line-height:16px;font-size:12px;color:#e0e0e0;left:1493.98px;letter-spacing:0.12px;">135</span>
<span class="t" style="top:671.15px;line-height:16px;font-size:12px;color:#e0e0e0;left:1546.28px;letter-spacing:0.12px;">150</span>
<span class="t" style="top:671.15px;line-height:16px;font-size:12px;color:#e0e0e0;left:1598.57px;letter-spacing:0.12px;">165</span>
<span class="t" style="top:671.15px;line-height:16px;font-size:12px;color:#e0e0e0;left:1650.87px;letter-spacing:0.12px;">180</span>
<span class="t" style="top:671.15px;line-height:16px;font-size:12px;color:#e0e0e0;left:1703.17px;letter-spacing:0.12px;">195</span>
<span class="t" style="top:671.15px;line-height:16px;font-size:12px;color:#e0e0e0;left:1755.46px;letter-spacing:0.12px;">210</span>
<span class="t" style="top:671.15px;line-height:16px;font-size:12px;color:#e0e0e0;left:1807.76px;letter-spacing:0.12px;">225</span>
<span class="t" style="top:671.15px;line-height:16px;font-size:12px;color:#e0e0e0;left:1860.06px;letter-spacing:0.12px;">240</span>
<div class="a" style="left:1033.8px;top:694.5px;width:871.2px;height:16.2px;background:#444444;"></div>
<div class="a" style="left:1029px;top:693.3px;width:5px;height:17.6px;background:#7ccdb3;border-radius:1px;"></div>
<div class="a" style="left:1905px;top:693.3px;width:5px;height:17.6px;background:#7ccdb3;border-radius:1px;"></div>
<div class="a" style="left:1033.8px;top:711.8px;width:871.2px;height:6.2px;background:#ffe97c;border-radius:0 0 3px 3px;"></div>
<div class="a" style="left:1042.4px;top:710.8px;width:80px;height:7.2px;overflow:hidden"><span class="t" style="left:0;top:-9.4px;font-size:12px;line-height:16px;color:#262626;letter-spacing:-0.1px">CircleOnGrid</span></div>
<div class="a" style="left:1033.8px;top:722px;width:871.2px;height:17.8px;background:#ffe97c;border-radius:3px;"></div>
<span class="t" style="top:723.35px;line-height:16px;font-size:12px;color:#262626;left:1042.4px;letter-spacing:-0.2px;">GridSE</span>
<div class="a" style="left:1033.8px;top:744px;width:871.2px;height:17.8px;background:#c4c4c4;border-radius:3px;"></div>
<span class="t" style="top:745.35px;line-height:16px;font-size:12px;color:#262626;left:1042.4px;letter-spacing:0.21px;">Vignette</span>
<div class="a" style="left:1033.8px;top:766px;width:871.2px;height:17.8px;background:#ff8ab4;border-radius:3px;background:repeating-linear-gradient(-45deg, #ff8fb8 0px, #ff8fb8 12.6px, #e67ea6 12.8px, #e67ea6 25.4px);"></div>
<span class="t" style="top:767.35px;line-height:16px;font-size:12px;color:#fff5f8;left:1042.4px;letter-spacing:-0.18px;">Gradient Shader [Background Shape]</span>
<div class="a" style="left:1033.8px;top:788px;width:871.2px;height:17.8px;background:#ffe97c;border-radius:3px;"></div>
<span class="t" style="top:789.35px;line-height:16px;font-size:12px;color:#262626;left:1042.4px;letter-spacing:-0.25px;">Background Shape</span>
<div class="a" style="left:1033.8px;top:810px;width:871.2px;height:17.8px;background:#c4c4c4;border-radius:3px;"></div>
<span class="t" style="top:811.35px;line-height:16px;font-size:12px;color:#262626;left:1042.4px;letter-spacing:-0.15px;">Graph</span>
<div class="a" style="left:1033.8px;top:854px;width:871.2px;height:17.8px;background:#f5a56e;border-radius:3px;background:repeating-linear-gradient(-45deg, #f7a874 0px, #f7a874 12.6px, #de9566 12.8px, #de9566 25.4px);"></div>
<span class="t" style="top:855.35px;line-height:16px;font-size:12px;color:#fff3ea;left:1042.4px;letter-spacing:-0.13px;">Jsmath [Length]</span>
<div class="a" style="left:1033.8px;top:876px;width:871.2px;height:17.8px;background:#ffe97c;border-radius:3px;"></div>
<span class="t" style="top:877.35px;line-height:16px;font-size:12px;color:#262626;left:1042.4px;letter-spacing:0.08px;">Duplicator - Horizontal</span>
<div class="a" style="left:1033.8px;top:898px;width:871.2px;height:17.8px;background:#ffe97c;border-radius:3px;"></div>
<span class="t" style="top:899.35px;line-height:16px;font-size:12px;color:#262626;left:1042.4px;letter-spacing:0.12px;">Duplicator - Vertical</span>
<div class="a" style="left:1033.8px;top:920.3px;width:871.2px;height:17.8px;background:#c4f07e;border-radius:3px;background:radial-gradient(circle at 0.75px 0.75px, #98ce4c 0.35px, rgba(152,206,76,0) 0.8px) 0 0/3px 3px, radial-gradient(circle at 0.75px 0.75px, #98ce4c 0.35px, rgba(152,206,76,0) 0.8px) 1.5px 1.5px/3px 3px, repeating-linear-gradient(-45deg, #effcae 0px, #effcae 12.6px, #e3f79c 12.8px, #e3f79c 25.4px);border:1.2px solid #fbfff0;border-radius:1px;"></div>
<span class="t" style="top:921.65px;line-height:16px;font-size:12px;color:#2c3320;left:1042.4px;letter-spacing:0.22px;">Modulate [Width]</span>
<div class="a" style="left:1033.8px;top:942.3px;width:871.2px;height:17.8px;background:#ffe97c;border-radius:3px;"></div>
<span class="t" style="top:943.65px;line-height:16px;font-size:12px;color:#262626;left:1042.4px;letter-spacing:-0.34px;">Basic Line</span>
<div class="a" style="left:1121px;top:839.2px;width:791px;height:1px;background:#245c3e;"></div>
<div class="a" style="left:1038px;top:838.6px;width:80px;height:2px;background:#e0e0e0;"></div>
<svg class="a" style="left:1029.5px;top:835.2px;" width="9" height="9" viewBox="0 0 9 9"><path d="M4.5 0.3 L8.7 4.5 L4.5 8.7 L0.3 4.5 Z" fill="#dcdcdc"/></svg>
<svg class="a" style="left:1116.5px;top:835.2px;" width="9" height="9" viewBox="0 0 9 9"><path d="M4.5 0.3 L8.7 4.5 L4.5 8.7 L0.3 4.5 Z" fill="#dcdcdc"/></svg>
<div class="a" style="left:1803.72px;top:692px;width:1.2px;height:270px;background:#7cc9ae;"></div>
<svg class="a" style="left:1796.72px;top:683.6px;" width="15.2" height="9.4" viewBox="0 0 15.2 9.4"><path d="M0.4 0.4 H14.8 L8.6 8.8 H6.6 Z" fill="#7ccdb3"/></svg>
<div class="a" style="left:1026.8px;top:964px;width:885.8px;height:9.6px;background:#4a4a4a;border-radius:5px;"></div>
<div class="a" style="left:1026.3px;top:976px;width:887.2px;height:21.8px;background:#444444;"></div>
<div class="a" style="left:1029.6px;top:978.4px;width:16.6px;height:17.6px;background:#2a2a2a;border-radius:3px;box-shadow:inset 0 0 0 1px #4a4a4a;"></div>
<svg class="a" style="left:1031.2px;top:981.4px;" width="14" height="13" viewBox="0 0 14 13"><path d="M0.6 1.4 H12.6 M0.6 5.4 H12.6" stroke="#e0e0e0" stroke-width="1.3"/><path d="M0.6 9.4 H3 M5 9.4 H7.4 M9.4 9.4 H11" stroke="#e0e0e0" stroke-width="1.3"/><path d="M14 10.6 V13 H11.6 Z" fill="#cfcfcf"/></svg>
<div class="a" style="left:1049.5px;top:979px;width:150.2px;height:15.6px;background:#333;border-radius:3px;"></div>
<span class="t" style="top:979.95px;line-height:16px;font-size:12px;color:#f0f0f0;left:1052.6px;letter-spacing:-0.13px;">Default Keyframe Layer</span>
<div class="a" style="left:1206px;top:979px;width:70px;height:15.6px;background:#2c2c2c;border-radius:3px;"></div>
<span class="t" style="top:979.95px;line-height:16px;font-size:12px;color:#555;left:1211px;">F</span>
<span class="t" style="top:979.55px;line-height:16px;font-size:12px;color:#8a8a8a;left:1223px;">-</span>
<span class="t" style="top:979.95px;line-height:16px;font-size:12px;color:#9c9c9c;left:1282px;letter-spacing:-0.01px;">Align:</span>
<div class="a" style="left:1319px;top:978.8px;width:50.6px;height:17px;background:#333;border-radius:4px;box-shadow:inset 0 0 0 1px #484848;"></div>
<svg class="a" style="left:1319px;top:978.8px;" width="17" height="17" viewBox="0 0 17 17"><path d="M3.2 3 V14 M5.4 5.8 H8 M9.4 5.8 H10.4 M5.4 11 H12.6" stroke="#dcdcdc" stroke-width="1.2" fill="none"/></svg>
<svg class="a" style="left:1336px;top:978.8px;" width="17" height="17" viewBox="0 0 17 17"><path d="M8.5 2.6 V14.4 M5.4 5.8 H7 M10 5.8 H11.6 M3.4 11 H13.6" stroke="#dcdcdc" stroke-width="1.2" fill="none"/></svg>
<svg class="a" style="left:1352.6px;top:978.8px;" width="17" height="17" viewBox="0 0 17 17"><path d="M13.8 3 V14 M7 5.8 H8 M9.4 5.8 H11.8 M4.4 11 H11.8" stroke="#dcdcdc" stroke-width="1.2" fill="none"/></svg>
<div class="a" style="left:1375px;top:978.6px;width:17.6px;height:17.6px;background:#383838;border-radius:4px;box-shadow:inset 0 0 0 1px #4a4a4a;"></div>
<svg class="a" style="left:1378px;top:981.6px;" width="12" height="12" viewBox="0 0 12 12"><rect x="0.8" y="0.8" width="10.4" height="10.4" fill="none" stroke="#6a6a6a" stroke-width="1.1" stroke-dasharray="2 1.6"/><rect x="5" y="5" width="2" height="2" fill="#6a6a6a"/></svg>
<div class="a" style="left:1396.2px;top:978.4px;width:31.2px;height:18px;background:#2a2a2a;border-radius:4px;box-shadow:inset 0 0 0 1px #4a4a4a;"></div>
<div class="a" style="left:1414.8px;top:979.2px;width:1px;height:16.4px;background:#444;"></div>
<div class="a" style="left:1431px;top:978.4px;width:31.2px;height:18px;background:#2a2a2a;border-radius:4px;box-shadow:inset 0 0 0 1px #4a4a4a;"></div>
<div class="a" style="left:1449.6px;top:979.2px;width:1px;height:16.4px;background:#444;"></div>
<svg class="a" style="left:1396.2px;top:978.4px;" width="31" height="18" viewBox="0 0 31 18"><path d="M8.7 14 L4.8 9.4 A4.4 4.4 0 0 1 12 5.2 L14 9.2" fill="none" stroke="#dcdcdc" stroke-width="2.5"/><path d="M22.4 5.2 L27.2 8.8 L22.4 12.4 Z" fill="none" stroke="#8a8a8a" stroke-width="1"/></svg>
<svg class="a" style="left:1431px;top:978.4px;" width="31" height="18" viewBox="0 0 31 18"><path d="M2.4 9 H16.4 M5 7 V11 M7.2 5 V13 M9.4 2.6 V15.4 M11.6 6 V12 M13.8 7.4 V10.6" stroke="#dcdcdc" stroke-width="1" fill="none"/><path d="M22.4 5.2 L27.2 8.8 L22.4 12.4 Z" fill="none" stroke="#8a8a8a" stroke-width="1"/></svg>
<svg class="a" style="left:1743.4px;top:980.6px;" width="14" height="14" viewBox="0 0 14 14"><circle cx="6" cy="6" r="5" fill="none" stroke="#d8d8d8" stroke-width="1"/><path d="M3.4 6 H8.6" stroke="#d8d8d8" stroke-width="1"/><path d="M9.8 10 L11.6 12" stroke="#d8d8d8" stroke-width="1.4"/><path d="M13.4 11.4 V13.6 H11.2 Z" fill="#cfcfcf"/></svg>
<div class="a" style="left:1772px;top:985.8px;width:110px;height:2.6px;background:#3a3a3a;border-radius:2px;"></div>
<div class="a" style="left:1761.6px;top:981.4px;width:11px;height:11px;background:#5ea88e;border-radius:6px;"></div>
<div class="a" style="left:1764.9px;top:984.7px;width:4.4px;height:4.4px;background:#3f8a70;border-radius:3px;"></div>
<svg class="a" style="left:1887.6px;top:980.6px;" width="14" height="14" viewBox="0 0 14 14"><circle cx="6" cy="6" r="5" fill="none" stroke="#d8d8d8" stroke-width="1"/><path d="M3.4 6 H8.6 M6 3.4 V8.6" stroke="#d8d8d8" stroke-width="1"/><path d="M9.8 10 L11.6 12" stroke="#d8d8d8" stroke-width="1.4"/><path d="M13.4 11.4 V13.6 H11.2 Z" fill="#cfcfcf"/></svg>
<div class="a" style="left:494px;top:1003.8px;width:1420px;height:22.4px;background:#3b3b3b;"></div>
<div class="a" style="left:497.9px;top:1010px;width:2px;height:2px;background:#8c8c8c;"></div>
<div class="a" style="left:497.9px;top:1014px;width:2px;height:2px;background:#8c8c8c;"></div>
<div class="a" style="left:497.9px;top:1018px;width:2px;height:2px;background:#8c8c8c;"></div>
<div class="a" style="left:507.4px;top:1007.6px;width:16.4px;height:15.6px;background:#262626;border-radius:3px;box-shadow:inset 0 0 0 1px #4a4a4a;"></div>
<svg class="a" style="left:509.2px;top:1009.4px;" width="14" height="13" viewBox="0 0 14 13"><path d="M0.6 0.6 H11.6 V8.6 H9 L10.6 11.4 L6.4 8.6 H0.6 Z" fill="#e8e8e8"/><path d="M2.4 2.8 H9.8 M2.4 4.6 H9.8 M2.4 6.4 H9.8" stroke="#333" stroke-width="0.9"/><path d="M14 10.8 V13 H11.8 Z" fill="#59c58f"/></svg>
<div class="a" style="left:528px;top:1008.4px;width:17.8px;height:13.4px;background:#2ecc71;border-radius:2px;"></div>
<span class="t" style="top:1007.85px;line-height:15px;font-size:11.5px;color:#0c2c18;left:533.6px;">9</span>
<div class="a" style="left:553.4px;top:1012.2px;width:6.2px;height:6.2px;background:#2ecc71;border-radius:4px;"></div>
<span class="t" style="top:1007.95px;line-height:16px;font-size:12px;color:#e0e0e0;left:565px;letter-spacing:-0.1px;">Saved scene to: D:/DATA/AI Creator/Cavalry/responsive-grid.cv.</span>
<span class="t" style="top:1007.65px;line-height:15px;font-size:11.5px;color:#e0e0e0;left:1349px;letter-spacing:-0.53px;font-style:italic;">Click to see next message</span>
<div class="a" style="left:1477.2px;top:1006px;width:79.6px;height:18px;background:#d6c06c;border-radius:2px;"></div>
<span class="t" style="top:1007.55px;line-height:16px;font-size:12px;color:#262626;left:1482.8px;letter-spacing:-0.46px;">Feedback</span>
<svg class="a" style="left:1538px;top:1008.4px;" width="14" height="14" viewBox="0 0 14 14"><path d="M1.6 0.6 H7.4 L10.4 3.6 V12.4 H1.6 Z" fill="#f2f2f2"/><path d="M3.2 4.6 H8 M3.2 6.6 H8.6 M3.2 8.6 H6.6" stroke="#b0b0b0" stroke-width="0.8"/><path d="M6.4 11 L7.2 8.6 L11.6 4.2 L13.2 5.8 L8.8 10.2 Z" fill="#f0a030"/><path d="M11.6 4.2 L12.4 3.4 L14 5 L13.2 5.8 Z" fill="#e05060"/></svg>
<div class="a" style="left:1560.1px;top:1006px;width:108.6px;height:18px;background:#2ecc71;border-radius:2px;"></div>
<span class="t" style="top:1007.55px;line-height:16px;font-size:12px;color:#14301e;left:1565.4px;letter-spacing:-0.17px;">Upgrade to Pro</span>
<svg class="a" style="left:1649px;top:1009.4px;" width="16" height="12" viewBox="0 0 16 12"><path d="M0.8 6.4 L3.4 3.8 L6.8 5.4 L7.2 10.6 L3 11.4 Z M15.2 6.4 L12.6 3.8 L9.2 5.4 L8.8 10.6 L13 11.4 Z" fill="#f4c430"/><path d="M3 0.6 L3.8 2.6 M8 0 V2 M13 0.6 L12.2 2.6" stroke="#5aa8e8" stroke-width="0.9"/></svg>
<div class="a" style="left:1672px;top:1006px;width:130px;height:18px;background:#b994ff;border-radius:2px;"></div>
<span class="t" style="top:1007.55px;line-height:16px;font-size:12px;color:#221638;left:1676.8px;letter-spacing:-0.12px;">New Beta Available</span>
<svg class="a" style="left:1782.6px;top:1008px;" width="15" height="15" viewBox="0 0 15 15"><circle cx="7.6" cy="8.6" r="5.6" fill="#f6c23a"/><path d="M2.6 5.6 L5.6 0.4 L9 3.8 Z" fill="#8a4fd0"/><path d="M4.8 10 Q7.6 13.4 10.6 10 Z" fill="#7a3a2a"/><circle cx="5.6" cy="8" r="0.8" fill="#5a3a1a"/><path d="M9 8 H10.8" stroke="#5a3a1a" stroke-width="0.9"/><path d="M11 9.4 L14.4 11 L12.6 12.6 Z" fill="#3a9ae8"/><circle cx="13" cy="3.4" r="0.8" fill="#e85a8a"/><circle cx="1.4" cy="11" r="0.7" fill="#4ac0e0"/></svg>
<div class="a" style="left:1805.2px;top:1006px;width:105.8px;height:18px;background:#3aa8f5;border-radius:2px;"></div>
<span class="t" style="top:1007.55px;line-height:16px;font-size:12px;color:#10263a;left:1810.3px;letter-spacing:-0.27px;">Tips and Tricks</span>
<svg class="a" style="left:1892px;top:1008.4px;" width="14" height="14" viewBox="0 0 14 14"><path d="M13.4 0.6 C9.4 0.6 6.4 2.6 4.2 6.6 L7.4 9.8 C11.4 7.6 13.4 4.6 13.4 0.6 Z" fill="#e8e8f0"/><circle cx="9.6" cy="4.4" r="1.3" fill="#4aa0e0"/><path d="M4.6 6 L1.6 6.6 L3.6 8 Z M8 9.4 L7.4 12.4 L6 10.4 Z" fill="#e04a5a"/><path d="M3.8 9.2 L1 13 L4.8 10.2 Z" fill="#f6a830"/></svg>
</body></html>
